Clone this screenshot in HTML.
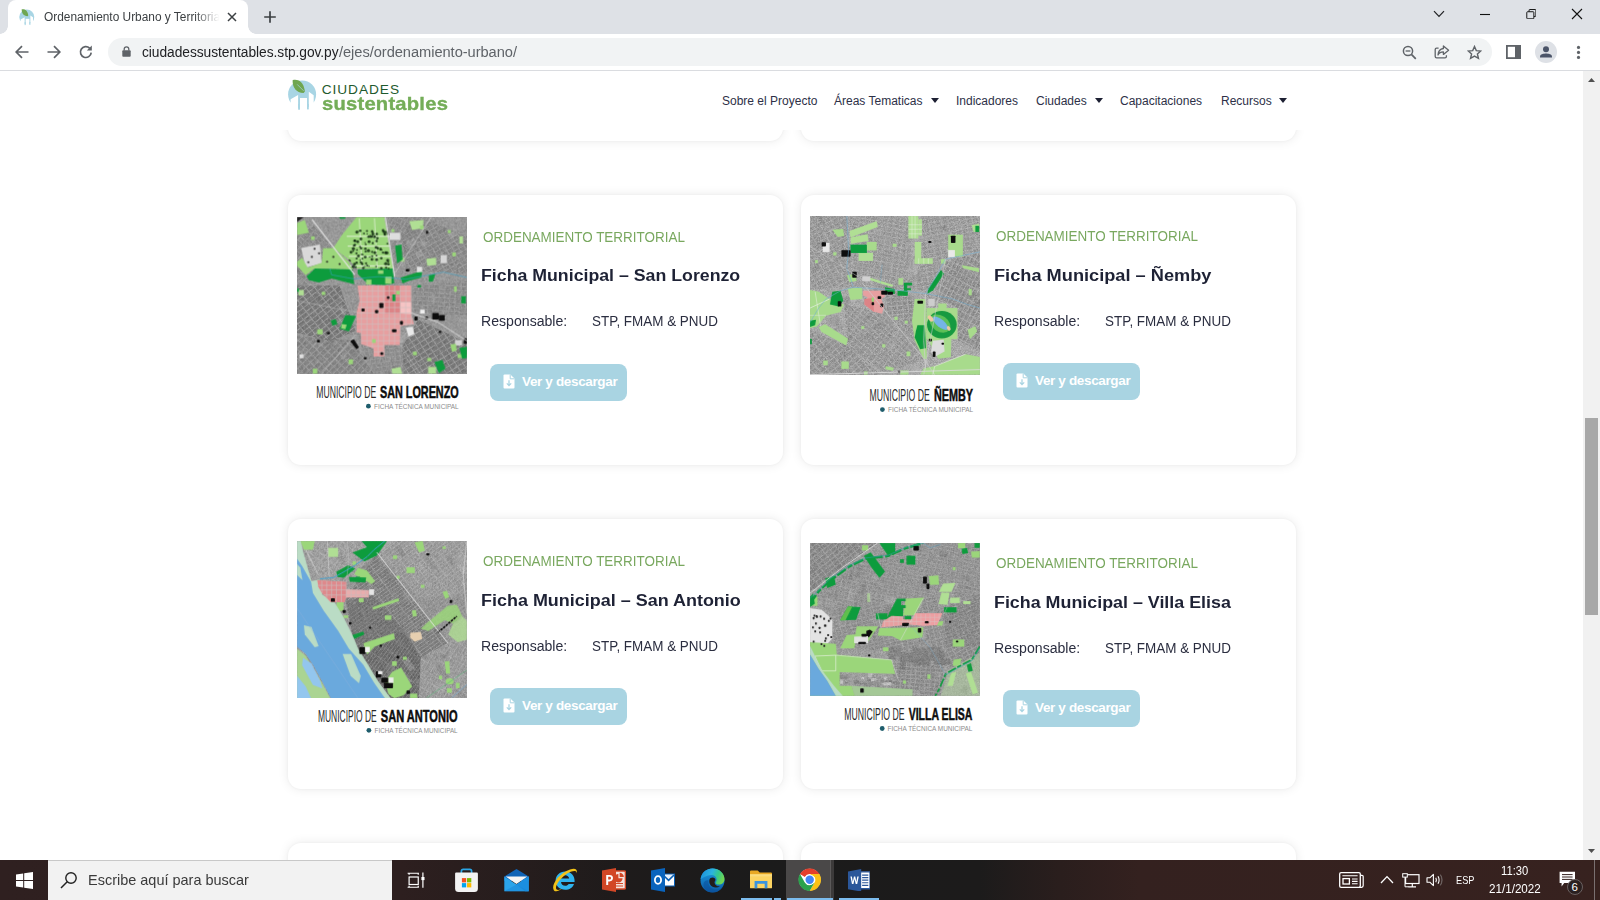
<!DOCTYPE html>
<html lang="es">
<head>
<meta charset="utf-8">
<title>Ordenamiento Urbano y Territorial</title>
<style>
*{box-sizing:border-box;margin:0;padding:0}
html,body{width:1600px;height:900px;overflow:hidden;background:#fff;font-family:"Liberation Sans",sans-serif;}
body{position:relative}
.abs{position:absolute}
/* ---------- browser chrome ---------- */
#tabstrip{position:absolute;left:0;top:0;width:1600px;height:34px;background:#dee1e6}
#tab{position:absolute;left:8px;top:0;width:240px;height:34px;background:#fff;border-radius:8px 8px 0 0}
#tab:before,#tab:after{content:"";position:absolute;bottom:0;width:8px;height:8px;background:radial-gradient(circle at 0 0,transparent 7.5px,#fff 8px)}
#tab:before{left:-8px}
#tab:after{right:-8px;background:radial-gradient(circle at 100% 0,transparent 7.5px,#fff 8px)}
#tabtitle{position:absolute;left:36.4px;top:9.6px;font-size:12px;color:#3c4043;white-space:nowrap;width:178px;overflow:hidden;transform:scaleX(.99);transform-origin:0 0;
 -webkit-mask-image:linear-gradient(90deg,#000 152px,transparent 177px);mask-image:linear-gradient(90deg,#000 152px,transparent 177px)}
#toolbar{position:absolute;left:0;top:34px;width:1600px;height:37px;background:#fff;border-bottom:1px solid #dadce0}
#omni{position:absolute;left:108px;top:4px;width:1384px;height:28px;border-radius:14px;background:#f1f3f4}
#url{position:absolute;left:34px;top:6.4px;font-size:14px;color:#202124;white-space:nowrap;letter-spacing:-.05px}
#url span{color:#5f6368}
/* ---------- page ---------- */
#page{position:absolute;left:0;top:71px;width:1583px;height:789px;background:#fff;overflow:hidden}
#sb{position:absolute;left:1583px;top:71px;width:17px;height:789px;background:#f1f1f1}
#sbthumb{position:absolute;left:2px;top:347px;width:13px;height:197px;background:#a8a8a8}
#hdr{position:absolute;left:0;top:0;width:1583px;height:59px;background:#fff;z-index:5}
.nav{position:absolute;top:23px;font-size:12px;color:#2d3047;white-space:nowrap}
.caret{position:absolute;top:27px;width:0;height:0;border-left:4.5px solid transparent;border-right:4.5px solid transparent;border-top:5px solid #1d2033}
.card{position:absolute;width:495px;height:270px;background:#fff;border-radius:13px;box-shadow:0 0 11px rgba(0,0,0,.085),0 0 3px rgba(0,0,0,.04)}
.cat{position:absolute;font-size:14.5px;color:#79a85f;white-space:nowrap;transform:scaleX(.928);transform-origin:0 0}
.ttl{position:absolute;font-size:17.2px;font-weight:bold;color:#1e2235;white-space:nowrap;transform-origin:0 0}
.rsp{position:absolute;font-size:14.25px;color:#2b2e40;white-space:nowrap;transform-origin:0 0}
.btn{position:absolute;width:137px;height:37px;border-radius:8px;background:#a9d4e2;color:#fff;font-weight:bold;font-size:13.5px}
.btn span{position:absolute;left:32px;top:10px;white-space:nowrap;letter-spacing:-.35px}
.btn svg{position:absolute;left:12.6px;top:10.2px}
.mapwrap{position:absolute;width:170px;overflow:hidden}
.cap{position:absolute;font-size:13px;color:#222;white-space:nowrap;text-align:right;transform-origin:100% 50%}
.cap b{color:#111}
.sub{position:absolute;font-size:6px;color:#555;white-space:nowrap;text-align:right}
/* ---------- taskbar ---------- */
#tb{position:absolute;left:0;top:860px;width:1600px;height:40px;background:linear-gradient(90deg,#2f2020 0,#2d1f1f 400px,#261d1d 520px,#1e1b1b 620px,#1b1b1b 760px,#1c1b1b 980px,#2a1e1d 1060px,#34211f 1140px,#37221f 1600px)}
#search{position:absolute;left:48px;top:0;width:344px;height:40px;background:#f2f2f2;border-top:1px solid #c8c8c8}
#search span{position:absolute;left:40px;top:10px;font-size:15px;color:#3a3a3a;white-space:nowrap;transform:scaleX(.965);transform-origin:0 0}
.tray{position:absolute;color:#fff;font-size:11px;white-space:nowrap}
</style>
</head>
<body>

<!-- ======= TAB STRIP ======= -->
<div id="tabstrip">
  <div id="tab">
    <div id="tabtitle">Ordenamiento Urbano y Territorial</div>
    <svg class="abs" style="left:8.4px;top:5.6px" width="23.6" height="22.5" viewBox="0 0 44 42">
      <circle cx="20.1" cy="20.5" r="14" fill="#a8d5e4"/>
      <path d="M8.6 25.3 L16.1 21 V37 H3 V30 L8.6 28.6 Z" fill="#fff"/>
      <path d="M26.8 17.7 L31.7 21.2 V28.4 L36 30 V37 H26.8 Z" fill="#fff"/>
      <rect x="18" y="24" width="7" height="13" fill="#fff"/>
      <rect x="16.1" y="30" width="1.9" height="5.7" fill="#a8d5e4"/>
      <rect x="25" y="30" width="1.8" height="5.4" fill="#a8d5e4"/>
      <path d="M10.6 6.2 C15 5 21.5 6.5 22.9 17.6 L21.6 19 C14 18.4 10.6 14 10.6 6.2 Z" fill="#6fa650"/>
    </svg>
    <svg class="abs" style="left:219px;top:12px" width="10" height="10" viewBox="0 0 10 10"><path d="M1 1 L9 9 M9 1 L1 9" stroke="#3c4043" stroke-width="1.5" fill="none"/></svg>

  </div>

  <svg class="abs" style="left:263px;top:10px" width="14" height="14" viewBox="0 0 14 14"><path d="M7 1.2 V12.8 M1.2 7 H12.8" stroke="#3c4043" stroke-width="1.7" fill="none"/></svg>
  <svg class="abs" style="left:1433px;top:9px" width="12" height="10" viewBox="0 0 12 10"><path d="M1 2.2 L6 7.4 L11 2.2" stroke="#202124" stroke-width="1.2" fill="none"/></svg>
  <svg class="abs" style="left:1480px;top:13px" width="10" height="3" viewBox="0 0 10 3"><path d="M0 1.5 H10" stroke="#111" stroke-width="1.1"/></svg>
  <svg class="abs" style="left:1525.6px;top:8.7px" width="10.6" height="10.6" viewBox="0 0 12 12"><path d="M3.5 3 V1.2 Q3.5 .6 4.1 .6 H10.6 Q11.2 .6 11.2 1.2 V7.8 Q11.2 8.4 10.6 8.4 H9" stroke="#111" stroke-width="1.1" fill="none"/><rect x=".9" y="3.1" width="8" height="8" rx=".8" stroke="#111" stroke-width="1.1" fill="none"/></svg>
  <svg class="abs" style="left:1571px;top:8px" width="12" height="12" viewBox="0 0 12 12"><path d="M1 1 L11 11 M11 1 L1 11" stroke="#111" stroke-width="1.1" fill="none"/></svg>
</div>

<!-- ======= TOOLBAR ======= -->
<div id="toolbar">

  <svg class="abs" style="left:14px;top:10px" width="16" height="16" viewBox="0 0 16 16"><path d="M14.5 8 H2.5 M8 2.2 L2.2 8 L8 13.8" stroke="#5f6368" stroke-width="1.7" fill="none"/></svg>
  <svg class="abs" style="left:46px;top:10px" width="16" height="16" viewBox="0 0 16 16"><path d="M1.5 8 H13.5 M8 2.2 L13.8 8 L8 13.8" stroke="#5f6368" stroke-width="1.7" fill="none"/></svg>
  <svg class="abs" style="left:78px;top:10px" width="16" height="16" viewBox="0 0 16 16"><path d="M13.2 8.6 A5.4 5.4 0 1 1 11.6 4.2" stroke="#5f6368" stroke-width="1.7" fill="none"/><path d="M13.8 1.6 V6.6 H8.8 Z" fill="#5f6368"/></svg>
  <svg class="abs" style="left:1506px;top:11px" width="15" height="14" viewBox="0 0 15 14"><rect x=".9" y=".9" width="13.2" height="12.2" fill="none" stroke="#5f6368" stroke-width="1.8"/><rect x="9" y="1" width="5" height="12" fill="#5f6368"/></svg>
  <div class="abs" style="left:1535px;top:7px;width:22px;height:22px;border-radius:11px;background:#dee1e6"></div>
  <svg class="abs" style="left:1535px;top:7px" width="22" height="22" viewBox="0 0 22 22"><circle cx="11" cy="8.3" r="3" fill="#4b5468"/><path d="M5 16.6 V15.4 C5 13.2 8.6 12.4 11 12.4 C13.4 12.4 17 13.2 17 15.4 V16.6 Z" fill="#4b5468"/></svg>
  <svg class="abs" style="left:1576px;top:11px" width="5" height="15" viewBox="0 0 5 15"><circle cx="2.5" cy="2.4" r="1.6" fill="#5f6368"/><circle cx="2.5" cy="7.4" r="1.6" fill="#5f6368"/><circle cx="2.5" cy="12.4" r="1.6" fill="#5f6368"/></svg>
  <div id="omni">
    
    <svg class="abs" style="left:14px;top:8px" width="9" height="11" viewBox="0 0 9 11"><rect x=".3" y="4.3" width="8.4" height="6.4" rx=".9" fill="#5f6368"/><path d="M2.2 4.6 V3.1 A2.3 2.3 0 0 1 6.8 3.1 V4.6" stroke="#5f6368" stroke-width="1.3" fill="none"/></svg>
    <svg class="abs" style="left:1294px;top:7px" width="15" height="15" viewBox="0 0 15 15"><circle cx="6" cy="6" r="4.6" stroke="#5f6368" stroke-width="1.5" fill="none"/><path d="M9.4 9.4 L13.8 13.8" stroke="#5f6368" stroke-width="1.7"/><path d="M3.6 6 H8.4" stroke="#5f6368" stroke-width="1.3"/></svg>
    <svg class="abs" style="left:1326px;top:7px" width="16" height="14" viewBox="0 0 16 14"><path d="M4.6 3.2 H2.6 Q1.2 3.2 1.2 4.6 V11.4 Q1.2 12.8 2.6 12.8 H11 Q12.4 12.8 12.4 11.4 V10.2" stroke="#5f6368" stroke-width="1.3" fill="none"/><path d="M9.4 .9 L14.6 5.2 L9.4 9.4 V6.9 C6.6 6.9 5 8 4 10 C4.2 6.6 6 4 9.4 3.5 Z" stroke="#5f6368" stroke-width="1.3" fill="none" stroke-linejoin="round"/></svg>
    <svg class="abs" style="left:1358.6px;top:6.6px" width="15" height="15" viewBox="0 0 16 16"><path d="M8 1.6 L9.9 6 L14.7 6.4 L11.1 9.6 L12.2 14.3 L8 11.8 L3.8 14.3 L4.9 9.6 L1.3 6.4 L6.1 6 Z" stroke="#5f6368" stroke-width="1.5" fill="none" stroke-linejoin="miter"/></svg>
    <div id="url" style="transform:scaleX(.984);transform-origin:0 0">ciudadessustentables.stp.gov.py</div><div id="url" style="left:230.8px;color:#5f6368;transform:scaleX(1.047);transform-origin:0 0">/ejes/ordenamiento-urbano/</div>
  </div>
</div>

<!-- ======= PAGE ======= -->
<div id="page">
  <div id="hdr">

    <svg class="abs" style="left:282px;top:3px" width="44" height="42" viewBox="0 0 44 42">
      <circle cx="20.1" cy="20.5" r="14" fill="#a8d5e4"/>
      <path d="M8.6 25.3 L16.1 21 V37 H3 V30 L8.6 28.6 Z" fill="#fff"/>
      <path d="M26.8 17.7 L31.7 21.2 V28.4 L36 30 V37 H26.8 Z" fill="#fff"/>
      <rect x="18" y="24" width="7" height="13" fill="#fff"/>
      <rect x="16.1" y="30" width="1.9" height="5.7" fill="#a8d5e4"/>
      <rect x="25" y="30" width="1.8" height="5.4" fill="#a8d5e4"/>
      <path d="M10.6 6.2 C15 5 21.5 6.5 22.9 17.6 L21.6 19 C14 18.4 10.6 14 10.6 6.2 Z" fill="#6fa650"/>
      <path d="M15.2 10.4 L21.6 16.8" stroke="#a8d5e4" stroke-width=".7"/>
    </svg>
    <div class="abs" style="left:321.7px;top:10.6px;font-size:13.7px;color:#1f5a2e;letter-spacing:.95px;white-space:nowrap">CIUDADES</div>
    <div class="abs" style="left:321.8px;top:23px;font-size:18.2px;font-weight:bold;color:#74ad58;letter-spacing:.2px;white-space:nowrap;transform:scaleX(1.11);transform-origin:0 0;-webkit-text-stroke:.35px #74ad58">sustentables</div>
    <div class="nav" style="left:722px">Sobre el Proyecto</div>
    <div class="nav" style="left:834px">Áreas Tematicas</div><div class="caret" style="left:931px"></div>
    <div class="nav" style="left:956px">Indicadores</div>
    <div class="nav" style="left:1036px">Ciudades</div><div class="caret" style="left:1095px"></div>
    <div class="nav" style="left:1120px">Capacitaciones</div>
    <div class="nav" style="left:1221px">Recursos</div><div class="caret" style="left:1279px"></div>
  </div>

  <!-- previous row (partially hidden) -->
  <div class="card" style="left:288px;top:-200px"></div>
  <div class="card" style="left:801px;top:-200px"></div>

  <!-- row 1 -->
  <div class="card" style="left:288px;top:124px" id="c1">
    <div class="mapwrap" style="left:9px;top:22px;height:157px"><!--M1S-->
<svg width="170" height="157" viewBox="0 0 170 157" style="display:block">
<defs>
<filter id="nz1" x="0" y="0" width="100%" height="100%"><feTurbulence type="fractalNoise" baseFrequency="0.55" numOctaves="2" seed="10"/><feColorMatrix type="matrix" values="0 0 0 0 0  0 0 0 0 0  0 0 0 0 0  1.6 0 0 0 -0.45"/></filter>
<filter id="nw1" x="0" y="0" width="100%" height="100%"><feTurbulence type="fractalNoise" baseFrequency="0.5" numOctaves="2" seed="16"/><feColorMatrix type="matrix" values="0 0 0 0 1  0 0 0 0 1  0 0 0 0 1  0 1.6 0 0 -0.5"/></filter>
<filter id="bl1"><feGaussianBlur stdDeviation="0.35"/></filter>
<clipPath id="cp1"><rect width="170" height="157"/></clipPath>
<pattern id="g1a" width="40" height="26" patternUnits="userSpaceOnUse" patternTransform="rotate(-38)"><rect width="34" height="20" fill="#6b6b6b"/></pattern><pattern id="g1b" width="36" height="28" patternUnits="userSpaceOnUse" patternTransform="rotate(-32)"><rect width="30" height="22" fill="#6e6e6e"/></pattern><pattern id="g1c" width="32" height="24" patternUnits="userSpaceOnUse" patternTransform="rotate(-30)"><rect width="26" height="18" fill="#7a7a7a"/></pattern><pattern id="g1d" width="30" height="24" patternUnits="userSpaceOnUse" patternTransform="rotate(4)"><rect width="24" height="18" fill="#808080"/></pattern><pattern id="g1e" width="37" height="27" patternUnits="userSpaceOnUse" patternTransform="rotate(-45)"><rect width="30" height="20" fill="#747474"/></pattern><pattern id="g1f" width="36" height="24" patternUnits="userSpaceOnUse" patternTransform="rotate(42)"><rect width="30" height="18" fill="#7c7c7c"/></pattern><pattern id="g1g" width="28" height="24" patternUnits="userSpaceOnUse" patternTransform="rotate(-8)"><rect width="22" height="18" fill="#828282"/></pattern><pattern id="g1h" width="30" height="22" patternUnits="userSpaceOnUse" patternTransform="rotate(-58)"><rect width="24" height="16" fill="#7e7e7e"/></pattern><clipPath id="pk1"><polygon points="350,395 650,395 650,560 666,612 590,622 586,727 500,727 500,792 440,792 440,747 370,722 370,662 345,656 345,545 362,480"/></clipPath></defs>
<g clip-path="url(#cp1)" filter="url(#bl1)">
<rect width="170" height="157" fill="#9e9e9e"/>
<g transform="scale(0.17883) translate(-12,-12)">
<polygon points="12,395 250,395 340,650 200,705 12,660" fill="url(#g1a)" opacity="0.75"/>
<polygon points="690,585 962,715 962,888 610,888 600,740" fill="url(#g1b)" opacity="0.75"/>
<polygon points="600,100 760,40 962,120 962,330 620,310" fill="url(#g1c)" opacity="0.55"/>
<polygon points="665,400 962,370 962,560 800,560 665,540" fill="url(#g1d)" opacity="0.5"/>
<polygon points="12,680 320,700 440,888 12,888" fill="url(#g1e)" opacity="0.6"/>
<polygon points="12,120 110,60 330,330 12,400" fill="url(#g1f)" opacity="0.5"/>
<polygon points="340,660 600,740 620,888 440,888" fill="url(#g1g)" opacity="0.45"/>
<polygon points="520,12 760,12 590,300 560,300" fill="url(#g1h)" opacity="0.45"/>
<g opacity="0.35"><rect x="219" y="475" width="38" height="27" fill="#959595" transform="rotate(-29 238 489)"/><rect x="853" y="415" width="44" height="17" fill="#959595" transform="rotate(60 875 423)"/><rect x="507" y="351" width="55" height="18" fill="#8a8a8a" transform="rotate(62 534 360)"/><rect x="624" y="55" width="52" height="26" fill="#6f6f6f" transform="rotate(-27 650 68)"/><rect x="239" y="522" width="57" height="22" fill="#b8b8b8" transform="rotate(62 268 533)"/><rect x="545" y="846" width="30" height="21" fill="#7c7c7c" transform="rotate(-30 560 857)"/><rect x="231" y="584" width="52" height="33" fill="#b8b8b8" transform="rotate(61 257 601)"/><rect x="503" y="359" width="33" height="20" fill="#7c7c7c" transform="rotate(-26 519 369)"/><rect x="622" y="137" width="55" height="35" fill="#c6c6c6" transform="rotate(-28 650 155)"/><rect x="190" y="731" width="45" height="19" fill="#7c7c7c" transform="rotate(63 213 740)"/><rect x="926" y="78" width="53" height="22" fill="#8a8a8a" transform="rotate(-32 952 90)"/><rect x="729" y="763" width="27" height="27" fill="#7c7c7c" transform="rotate(62 742 777)"/><rect x="297" y="771" width="59" height="24" fill="#7c7c7c" transform="rotate(-34 326 784)"/><rect x="86" y="464" width="58" height="35" fill="#6f6f6f" transform="rotate(-33 115 481)"/><rect x="34" y="755" width="36" height="35" fill="#b8b8b8" transform="rotate(60 52 772)"/><rect x="483" y="563" width="46" height="26" fill="#c6c6c6" transform="rotate(-31 506 576)"/><rect x="679" y="202" width="36" height="35" fill="#c6c6c6" transform="rotate(-30 696 220)"/><rect x="0" y="369" width="45" height="13" fill="#c6c6c6" transform="rotate(-34 23 376)"/><rect x="584" y="410" width="49" height="21" fill="#959595" transform="rotate(-28 608 420)"/><rect x="9" y="47" width="49" height="35" fill="#6f6f6f" transform="rotate(58 33 65)"/><rect x="568" y="152" width="31" height="30" fill="#c6c6c6" transform="rotate(-32 583 167)"/><rect x="357" y="676" width="26" height="26" fill="#959595" transform="rotate(-32 370 689)"/><rect x="207" y="708" width="33" height="17" fill="#b8b8b8" transform="rotate(-33 223 716)"/><rect x="291" y="293" width="54" height="23" fill="#8a8a8a" transform="rotate(-31 318 304)"/><rect x="609" y="778" width="41" height="18" fill="#7c7c7c" transform="rotate(-30 630 787)"/><rect x="166" y="710" width="54" height="17" fill="#6f6f6f" transform="rotate(-28 193 719)"/><rect x="603" y="711" width="37" height="16" fill="#6f6f6f" transform="rotate(-30 622 718)"/><rect x="592" y="260" width="45" height="13" fill="#b8b8b8" transform="rotate(-32 614 266)"/><rect x="442" y="729" width="47" height="24" fill="#c6c6c6" transform="rotate(-34 465 741)"/><rect x="420" y="654" width="51" height="35" fill="#c6c6c6" transform="rotate(-27 446 672)"/><rect x="801" y="756" width="59" height="15" fill="#8a8a8a" transform="rotate(-34 830 764)"/><rect x="759" y="444" width="32" height="33" fill="#b8b8b8" transform="rotate(-34 775 461)"/><rect x="702" y="148" width="35" height="28" fill="#c6c6c6" transform="rotate(56 720 163)"/><rect x="865" y="94" width="29" height="35" fill="#c6c6c6" transform="rotate(62 879 112)"/><rect x="56" y="189" width="29" height="33" fill="#7c7c7c" transform="rotate(-32 70 205)"/><rect x="257" y="774" width="29" height="34" fill="#b8b8b8" transform="rotate(56 272 791)"/><rect x="248" y="236" width="43" height="22" fill="#b8b8b8" transform="rotate(-28 270 247)"/><rect x="-1" y="52" width="29" height="15" fill="#7c7c7c" transform="rotate(64 14 60)"/><rect x="802" y="77" width="43" height="20" fill="#6f6f6f" transform="rotate(-31 824 87)"/><rect x="608" y="517" width="38" height="17" fill="#6f6f6f" transform="rotate(57 627 526)"/><rect x="521" y="632" width="38" height="14" fill="#8a8a8a" transform="rotate(-31 540 639)"/><rect x="567" y="682" width="38" height="31" fill="#c6c6c6" transform="rotate(56 586 698)"/><rect x="590" y="660" width="36" height="35" fill="#b8b8b8" transform="rotate(56 608 678)"/><rect x="197" y="233" width="46" height="31" fill="#8a8a8a" transform="rotate(57 220 249)"/><rect x="9" y="284" width="59" height="26" fill="#6f6f6f" transform="rotate(-30 39 297)"/><rect x="105" y="708" width="48" height="33" fill="#b8b8b8" transform="rotate(-28 129 724)"/><rect x="525" y="96" width="46" height="13" fill="#8a8a8a" transform="rotate(-28 548 102)"/><rect x="40" y="76" width="28" height="33" fill="#8a8a8a" transform="rotate(-31 54 92)"/><rect x="807" y="22" width="29" height="24" fill="#959595" transform="rotate(-29 822 34)"/><rect x="745" y="32" width="52" height="25" fill="#959595" transform="rotate(-33 771 44)"/></g>
<rect x="12" y="12" width="951" height="878" filter="url(#nz1)" opacity=".26"/><rect x="12" y="12" width="951" height="878" filter="url(#nw1)" opacity=".24"/>
<polygon points="35,185 140,165 150,270 60,295" fill="#d9d9d9" />
<rect x="530" y="100" width="60" height="40" fill="#dedede" />
<rect x="815" y="225" width="35" height="45" fill="#d6d6d6" />
<rect x="682" y="290" width="30" height="32" fill="#e2e2e2" />
<rect x="700" y="530" width="26" height="22" fill="#f0f0f0" />
<polygon points="620,630 660,625 668,668 635,682" fill="#e9e9e9" />
<rect x="895" y="700" width="40" height="30" fill="#d4d4d4" />
<rect x="25" y="780" width="23" height="22" fill="#e0e0e0" />
<polygon points="345,12 500,12 525,170 552,300 345,300 300,250 215,185 265,110" fill="#9bd67a" />
<polygon points="158,186 215,185 300,260 325,305 110,300 60,338 12,285 12,262 40,240 72,296 150,268" fill="#9bd67a" />
<polygon points="12,45 55,28 78,100 12,112" fill="#9bd67a" />
<polygon points="640,35 720,28 715,75 655,85" fill="#b0df94" />
<rect x="880" y="210" width="20" height="22" fill="#9bd67a" />
<polygon points="735,245 790,240 790,280 740,285" fill="#b0df94" />
<rect x="300" y="808" width="25" height="27" fill="#9bd67a" />
<rect x="660" y="765" width="22" height="20" fill="#9bd67a" />
<polygon points="870,725 900,720 905,760 878,765" fill="#9bd67a" />
<rect x="740" y="800" width="22" height="18" fill="#9bd67a" />
<rect x="910" y="778" width="22" height="22" fill="#9bd67a" />
<rect x="125" y="640" width="30" height="28" fill="#9bd67a" />
<rect x="890" y="400" width="15" height="30" fill="#9bd67a" />
<rect x="920" y="120" width="20" height="40" fill="#b0df94" />
<rect x="855" y="85" width="17" height="17" fill="#9bd67a" />
<rect x="540" y="80" width="16" height="16" fill="#9bd67a" />
<rect x="90" y="120" width="20" height="20" fill="#9bd67a" />
<rect x="20" y="420" width="30" height="30" fill="#b0df94" />
<rect x="150" y="430" width="20" height="18" fill="#9bd67a" />
<rect x="100" y="860" width="25" height="28" fill="#9bd67a" />
<polygon points="540,860 590,850 600,888 545,888" fill="#b0df94" />
<rect x="745" y="850" width="45" height="38" fill="#b0df94" />
<rect x="590" y="240" width="22" height="22" fill="#9bd67a" />
<rect x="700" y="60" width="20" height="22" fill="#9bd67a" />
<polygon points="65,345 112,300 322,305 332,388 205,355 135,378 78,366" fill="#0f9c3d" />
<polygon points="350,305 548,300 556,382 500,392 410,388 352,332" fill="#0f9c3d" />
<polygon points="560,172 596,165 602,250 572,272" fill="#0f9c3d" />
<polygon points="590,352 680,322 712,320 706,352 640,368 602,384" fill="#0f9c3d" />
<polygon points="750,336 786,330 772,372 748,374" fill="#0f9c3d" />
<polygon points="200,590 228,582 238,612 210,620" fill="#0f9c3d" />
<polygon points="282,560 342,566 302,652 250,636" fill="#0f9c3d" />
<polygon points="262,610 290,615 282,640 258,634" fill="#9bd67a" />
<rect x="930" y="455" width="26" height="40" fill="#0f9c3d" />
<polygon points="920,745 962,738 962,800 935,805" fill="#0f9c3d" />
<polygon points="780,822 825,812 842,860 805,885" fill="#0f9c3d" />
<rect x="250" y="12" width="32" height="10" fill="#0f9c3d" />
<rect x="685" y="392" width="20" height="14" fill="#0f9c3d" />
<rect x="12" y="410" width="10" height="20" fill="#0f9c3d" />
<rect x="465" y="310" width="30" height="20" fill="#9bd67a" />
<rect x="505" y="345" width="35" height="40" fill="#9bd67a" />
<rect x="398" y="362" width="30" height="28" fill="#9bd67a" />
<path d="M290.0 120 L535 120" stroke="#e8f3e0" stroke-width="5" fill="none" />
<path d="M295.5 175 L535 175" stroke="#e8f3e0" stroke-width="5" fill="none" />
<path d="M301.2 232 L535 232" stroke="#e8f3e0" stroke-width="5" fill="none" />
<path d="M306.5 285 L535 285" stroke="#e8f3e0" stroke-width="5" fill="none" />
<path d="M360 20 L375 300" stroke="#e8f3e0" stroke-width="4" fill="none" />
<path d="M445 20 L460 300" stroke="#e8f3e0" stroke-width="4" fill="none" />
<circle cx="396" cy="165" r="5" fill="#102a10" opacity=".85"/>
<circle cx="493" cy="86" r="7" fill="#102a10" opacity=".85"/>
<circle cx="501" cy="102" r="7" fill="#102a10" opacity=".85"/>
<circle cx="433" cy="94" r="6" fill="#102a10" opacity=".85"/>
<circle cx="454" cy="182" r="8" fill="#102a10" opacity=".85"/>
<circle cx="507" cy="212" r="8" fill="#102a10" opacity=".85"/>
<circle cx="377" cy="245" r="5" fill="#102a10" opacity=".85"/>
<circle cx="355" cy="230" r="8" fill="#102a10" opacity=".85"/>
<circle cx="386" cy="104" r="5" fill="#102a10" opacity=".85"/>
<circle cx="335" cy="145" r="8" fill="#102a10" opacity=".85"/>
<circle cx="333" cy="276" r="8" fill="#102a10" opacity=".85"/>
<circle cx="403" cy="90" r="6" fill="#102a10" opacity=".85"/>
<circle cx="503" cy="109" r="7" fill="#102a10" opacity=".85"/>
<circle cx="314" cy="209" r="8" fill="#102a10" opacity=".85"/>
<circle cx="404" cy="283" r="6" fill="#102a10" opacity=".85"/>
<circle cx="381" cy="222" r="4" fill="#102a10" opacity=".85"/>
<circle cx="424" cy="122" r="7" fill="#102a10" opacity=".85"/>
<circle cx="515" cy="97" r="7" fill="#102a10" opacity=".85"/>
<circle cx="431" cy="117" r="5" fill="#102a10" opacity=".85"/>
<circle cx="524" cy="300" r="5" fill="#102a10" opacity=".85"/>
<circle cx="454" cy="289" r="5" fill="#102a10" opacity=".85"/>
<circle cx="432" cy="94" r="6" fill="#102a10" opacity=".85"/>
<circle cx="447" cy="212" r="8" fill="#102a10" opacity=".85"/>
<circle cx="492" cy="211" r="6" fill="#102a10" opacity=".85"/>
<circle cx="382" cy="297" r="7" fill="#102a10" opacity=".85"/>
<circle cx="364" cy="178" r="5" fill="#102a10" opacity=".85"/>
<circle cx="392" cy="155" r="4" fill="#102a10" opacity=".85"/>
<circle cx="436" cy="107" r="8" fill="#102a10" opacity=".85"/>
<circle cx="479" cy="192" r="8" fill="#102a10" opacity=".85"/>
<circle cx="345" cy="244" r="6" fill="#102a10" opacity=".85"/>
<circle cx="340" cy="292" r="6" fill="#102a10" opacity=".85"/>
<circle cx="375" cy="270" r="6" fill="#102a10" opacity=".85"/>
<circle cx="445" cy="122" r="8" fill="#102a10" opacity=".85"/>
<circle cx="347" cy="96" r="9" fill="#102a10" opacity=".85"/>
<circle cx="326" cy="289" r="9" fill="#102a10" opacity=".85"/>
<circle cx="431" cy="88" r="4" fill="#102a10" opacity=".85"/>
<circle cx="335" cy="169" r="7" fill="#102a10" opacity=".85"/>
<circle cx="517" cy="161" r="5" fill="#102a10" opacity=".85"/>
<circle cx="420" cy="115" r="4" fill="#102a10" opacity=".85"/>
<circle cx="418" cy="235" r="4" fill="#102a10" opacity=".85"/>
<circle cx="393" cy="236" r="8" fill="#102a10" opacity=".85"/>
<circle cx="377" cy="276" r="5" fill="#102a10" opacity=".85"/>
<circle cx="457" cy="251" r="8" fill="#102a10" opacity=".85"/>
<circle cx="404" cy="106" r="4" fill="#102a10" opacity=".85"/>
<circle cx="412" cy="122" r="7" fill="#102a10" opacity=".85"/>
<circle cx="305" cy="253" r="5" fill="#102a10" opacity=".85"/>
<circle cx="395" cy="205" r="6" fill="#102a10" opacity=".85"/>
<circle cx="327" cy="189" r="9" fill="#102a10" opacity=".85"/>
<circle cx="414" cy="287" r="4" fill="#102a10" opacity=".85"/>
<circle cx="523" cy="276" r="7" fill="#102a10" opacity=".85"/>
<circle cx="411" cy="200" r="9" fill="#102a10" opacity=".85"/>
<circle cx="415" cy="150" r="8" fill="#102a10" opacity=".85"/>
<circle cx="458" cy="107" r="7" fill="#102a10" opacity=".85"/>
<circle cx="394" cy="190" r="7" fill="#102a10" opacity=".85"/>
<circle cx="375" cy="274" r="5" fill="#102a10" opacity=".85"/>
<circle cx="483" cy="242" r="7" fill="#102a10" opacity=".85"/>
<circle cx="495" cy="93" r="7" fill="#102a10" opacity=".85"/>
<circle cx="432" cy="231" r="6" fill="#102a10" opacity=".85"/>
<circle cx="431" cy="124" r="4" fill="#102a10" opacity=".85"/>
<circle cx="370" cy="186" r="7" fill="#102a10" opacity=".85"/>
<circle cx="365" cy="253" r="4" fill="#102a10" opacity=".85"/>
<circle cx="514" cy="212" r="9" fill="#102a10" opacity=".85"/>
<circle cx="522" cy="264" r="5" fill="#102a10" opacity=".85"/>
<circle cx="369" cy="135" r="8" fill="#102a10" opacity=".85"/>
<circle cx="510" cy="295" r="6" fill="#102a10" opacity=".85"/>
<circle cx="463" cy="186" r="7" fill="#102a10" opacity=".85"/>
<circle cx="374" cy="221" r="5" fill="#102a10" opacity=".85"/>
<circle cx="347" cy="196" r="5" fill="#102a10" opacity=".85"/>
<circle cx="390" cy="288" r="4" fill="#102a10" opacity=".85"/>
<circle cx="310" cy="257" r="4" fill="#102a10" opacity=".85"/>
<circle cx="345" cy="268" r="7" fill="#102a10" opacity=".85"/>
<circle cx="351" cy="150" r="8" fill="#102a10" opacity=".85"/>
<circle cx="519" cy="254" r="9" fill="#102a10" opacity=".85"/>
<circle cx="508" cy="273" r="9" fill="#102a10" opacity=".85"/>
<circle cx="517" cy="105" r="6" fill="#102a10" opacity=".85"/>
<circle cx="344" cy="215" r="6" fill="#102a10" opacity=".85"/>
<circle cx="368" cy="265" r="6" fill="#102a10" opacity=".85"/>
<circle cx="335" cy="144" r="6" fill="#102a10" opacity=".85"/>
<circle cx="432" cy="207" r="6" fill="#102a10" opacity=".85"/>
<circle cx="330" cy="171" r="6" fill="#102a10" opacity=".85"/>
<circle cx="326" cy="202" r="5" fill="#102a10" opacity=".85"/>
<circle cx="456" cy="227" r="5" fill="#102a10" opacity=".85"/>
<circle cx="435" cy="158" r="6" fill="#102a10" opacity=".85"/>
<circle cx="431" cy="249" r="8" fill="#102a10" opacity=".85"/>
<circle cx="461" cy="130" r="7" fill="#102a10" opacity=".85"/>
<circle cx="365" cy="89" r="7" fill="#102a10" opacity=".85"/>
<circle cx="398" cy="271" r="6" fill="#102a10" opacity=".85"/>
<circle cx="485" cy="196" r="4" fill="#102a10" opacity=".85"/>
<circle cx="457" cy="146" r="7" fill="#102a10" opacity=".85"/>
<circle cx="506" cy="94" r="5" fill="#102a10" opacity=".85"/>
<circle cx="483" cy="299" r="7" fill="#102a10" opacity=".85"/>
<circle cx="110" cy="190" r="6" fill="#151515" opacity=".8"/>
<circle cx="135" cy="215" r="6" fill="#151515" opacity=".8"/>
<circle cx="75" cy="265" r="6" fill="#151515" opacity=".8"/>
<circle cx="95" cy="235" r="6" fill="#151515" opacity=".8"/>
<circle cx="180" cy="262" r="6" fill="#151515" opacity=".8"/>
<circle cx="250" cy="275" r="6" fill="#151515" opacity=".8"/>
<circle cx="215" cy="235" r="6" fill="#151515" opacity=".8"/>
<path d="M195 300 L205 335 L330 358 L470 345 L620 360 L750 336 L830 320 L962 350" stroke="#37a5cf" stroke-width="3" fill="none" />
<polygon points="350,395 650,395 650,560 666,612 590,622 586,727 500,727 500,792 440,792 440,747 370,722 370,662 345,656 345,545 362,480" fill="#e79fa0" />
<polygon points="505,395 590,395 590,552 505,552" fill="#dd8386" />
<polygon points="590,490 650,490 650,555 590,552" fill="#f6c4c4" />
<path d="M372 395 V790 M403 395 V790 M434 395 V790 M465 395 V790 M496 395 V790 M527 395 V790 M558 395 V790 M589 395 V790 M620 395 V790 M651 395 V790 M345 425 H666 M345 456 H666 M345 487 H666 M345 518 H666 M345 549 H666 M345 580 H666 M345 611 H666 M345 642 H666 M345 673 H666 M345 704 H666 M345 735 H666 M345 766 H666" stroke="#cfc0c0" stroke-width="4" opacity=".9" clip-path="url(#pk1)"/>
<rect x="545" y="445" width="17" height="37" fill="#0f9c3d" />
<rect x="566" y="425" width="20" height="21" fill="#9bd67a" />
<rect x="432" y="695" width="20" height="21" fill="#9bd67a" />
<rect x="472" y="493" width="23" height="27" fill="#0b0b0b" rx="4"/>
<rect x="372" y="523" width="18" height="17" fill="#0b0b0b" rx="4"/>
<rect x="448" y="532" width="18" height="18" fill="#0b0b0b" rx="4"/>
<rect x="543" y="640" width="25" height="16" fill="#0b0b0b" rx="4"/>
<rect x="588" y="593" width="16" height="21" fill="#0b0b0b" rx="4"/>
<rect x="668" y="568" width="18" height="22" fill="#0b0b0b" rx="4"/>
<rect x="728" y="568" width="17" height="16" fill="#0b0b0b" rx="4"/>
<rect x="768" y="548" width="37" height="37" fill="#0b0b0b" rx="4"/>
<rect x="805" y="560" width="33" height="32" fill="#0b0b0b" rx="4"/>
<rect x="478" y="768" width="16" height="16" fill="#0b0b0b" rx="4"/>
<rect x="945" y="690" width="17" height="32" fill="#0b0b0b" rx="4"/>
<rect x="733" y="88" width="12" height="18" fill="#0b0b0b" rx="4"/>
<rect x="123" y="698" width="17" height="16" fill="#0b0b0b" rx="4"/>
<rect x="620" y="303" width="20" height="13" fill="#0b0b0b" rx="4"/>
<rect x="515" y="455" width="13" height="15" fill="#0b0b0b" rx="4"/>
<rect x="180" y="655" width="15" height="13" fill="#0b0b0b" rx="4"/>
<rect x="386" y="795" width="14" height="13" fill="#0b0b0b" rx="4"/>
<rect x="805" y="648" width="13" height="12" fill="#0b0b0b" rx="4"/>
<polygon points="308,705 330,695 358,740 345,752" fill="#0b0b0b" />
<polygon points="12,12 50,12 12,40" fill="#222" />
<path d="M95 25 L335 335" stroke="#e3e3e3" stroke-width="6" fill="none" />
<path d="M505 12 L557 345" stroke="#e6e6e6" stroke-width="6" fill="none" />
<path d="M760 14 L560 325" stroke="#cfcfcf" stroke-width="4" fill="none" />
<path d="M650 548 L800 600 L962 705" stroke="#d8d8d8" stroke-width="5" fill="none" />
<path d="M340 670 L200 830 L150 888" stroke="#c8c8c8" stroke-width="4" fill="none" />
<path d="M345 545 L12 480" stroke="#bdbdbd" stroke-width="3" fill="none" />
<path d="M590 727 L700 888" stroke="#c4c4c4" stroke-width="3" fill="none" />
</g>
</g>
</svg>
<!--M1E--></div>
    <svg class="abs" style="left:9px;top:187.4px" width="172" height="34" viewBox="0 0 172 34">
      <text x="19.3" y="16.0" font-family="Liberation Sans, sans-serif" font-size="16.2" fill="#2a2a2a" textLength="59.9" lengthAdjust="spacingAndGlyphs">MUNICIPIO DE</text>
      <text x="83" y="16.0" font-family="Liberation Sans, sans-serif" font-size="16.2" font-weight="bold" fill="#0d0d0d" stroke="#0d0d0d" stroke-width=".5" textLength="78.7" lengthAdjust="spacingAndGlyphs">SAN LORENZO</text>
      <circle cx="71.4" cy="24.2" r="2.4" fill="#1f5d6c"/>
      <text x="77.1" y="27.0" font-family="Liberation Sans, sans-serif" font-size="6.9" fill="#8c8c8c" textLength="84.6" lengthAdjust="spacingAndGlyphs">FICHA TÉCNICA MUNICIPAL</text>
    </svg>
    <div class="cat" style="left:195px;top:34px">ORDENAMIENTO TERRITORIAL</div>
    <div class="ttl" style="left:192.6px;top:70.2px;transform:scaleX(1.032)">Ficha Municipal – San Lorenzo</div>
    <div class="rsp" style="left:192.6px;top:118px;transform:scaleX(.99)">Responsable:</div>
    <div class="rsp" style="left:304.2px;top:118px;transform:scaleX(.943)">STP, FMAM &amp; PNUD</div>
    <div class="btn" style="left:202px;top:169px"><svg width="12" height="15" viewBox="0 0 12 15"><path d="M1.6 .5 H7.4 L11.5 4.6 V13.4 Q11.5 14.5 10.4 14.5 H1.6 Q.5 14.5 .5 13.4 V1.6 Q.5 .5 1.6 .5 Z" fill="#fff"/><path d="M7.2 .6 V4.8 H11.4" fill="none" stroke="#a9d4e2" stroke-width="1"/><path d="M6 6.2 V11.4 M3.8 9.4 L6 11.6 L8.2 9.4" stroke="#a9d4e2" stroke-width="1.3" fill="none"/></svg><span>Ver y descargar</span></div>
  </div>
  <div class="card" style="left:801px;top:124px" id="c2">
    <div class="mapwrap" style="left:9px;top:21px;height:159px"><!--M2S-->
<svg width="170" height="159" viewBox="0 0 170 159" style="display:block">
<defs>
<filter id="nz2" x="0" y="0" width="100%" height="100%"><feTurbulence type="fractalNoise" baseFrequency="0.55" numOctaves="2" seed="17"/><feColorMatrix type="matrix" values="0 0 0 0 0  0 0 0 0 0  0 0 0 0 0  1.6 0 0 0 -0.45"/></filter>
<filter id="nw2" x="0" y="0" width="100%" height="100%"><feTurbulence type="fractalNoise" baseFrequency="0.5" numOctaves="2" seed="21"/><feColorMatrix type="matrix" values="0 0 0 0 1  0 0 0 0 1  0 0 0 0 1  0 1.6 0 0 -0.5"/></filter>
<filter id="bl2"><feGaussianBlur stdDeviation="0.35"/></filter>
<clipPath id="cp2"><rect width="170" height="159"/></clipPath>
<pattern id="g2a" width="34" height="24" patternUnits="userSpaceOnUse" patternTransform="rotate(-28)"><rect width="28" height="18" fill="#7c7c7c"/></pattern><pattern id="g2b" width="32" height="24" patternUnits="userSpaceOnUse" patternTransform="rotate(10)"><rect width="26" height="18" fill="#808080"/></pattern><pattern id="g2c" width="34" height="24" patternUnits="userSpaceOnUse" patternTransform="rotate(-12)"><rect width="28" height="18" fill="#7e7e7e"/></pattern><pattern id="g2d" width="36" height="24" patternUnits="userSpaceOnUse" patternTransform="rotate(-62)"><rect width="30" height="18" fill="#6f6f6f"/></pattern><pattern id="g2e" width="36" height="26" patternUnits="userSpaceOnUse" patternTransform="rotate(-40)"><rect width="30" height="20" fill="#747474"/></pattern><pattern id="g2f" width="32" height="24" patternUnits="userSpaceOnUse" patternTransform="rotate(40)"><rect width="26" height="18" fill="#7a7a7a"/></pattern><pattern id="g2g" width="30" height="24" patternUnits="userSpaceOnUse" patternTransform="rotate(-5)"><rect width="24" height="18" fill="#6c6c6c"/></pattern></defs>
<g clip-path="url(#cp2)" filter="url(#bl2)">
<rect width="170" height="159" fill="#b2b2b2"/>
<g transform="scale(0.18106) translate(-12,-12)">
<polygon points="12,12 215,12 250,400 12,420" fill="url(#g2a)" opacity="0.38"/>
<polygon points="230,12 555,12 590,420 260,400" fill="url(#g2b)" opacity="0.34"/>
<polygon points="630,12 950,12 950,210 760,250 650,430 600,420" fill="url(#g2c)" opacity="0.34"/>
<polygon points="760,260 950,215 950,760 830,700 830,520 700,470" fill="url(#g2d)" opacity="0.45"/>
<polygon points="12,640 220,730 400,888 12,888" fill="url(#g2e)" opacity="0.41"/>
<polygon points="200,500 420,550 590,600 640,800 420,888 220,725" fill="url(#g2f)" opacity="0.38"/>
<polygon points="430,450 590,450 590,600 420,550" fill="url(#g2g)" opacity="0.41"/>
<g opacity="0.3"><rect x="140" y="603" width="54" height="27" fill="#8a8a8a" transform="rotate(67 167 616)"/><rect x="475" y="448" width="36" height="13" fill="#6f6f6f" transform="rotate(62 493 454)"/><rect x="739" y="209" width="35" height="14" fill="#959595" transform="rotate(66 757 215)"/><rect x="20" y="292" width="47" height="16" fill="#6f6f6f" transform="rotate(-28 44 300)"/><rect x="745" y="108" width="67" height="26" fill="#c6c6c6" transform="rotate(-26 779 121)"/><rect x="131" y="576" width="46" height="37" fill="#7c7c7c" transform="rotate(-27 154 595)"/><rect x="891" y="778" width="59" height="35" fill="#c6c6c6" transform="rotate(-28 921 795)"/><rect x="442" y="717" width="34" height="40" fill="#c6c6c6" transform="rotate(63 459 736)"/><rect x="888" y="438" width="39" height="27" fill="#6f6f6f" transform="rotate(-22 907 451)"/><rect x="126" y="633" width="69" height="13" fill="#7c7c7c" transform="rotate(-24 161 639)"/><rect x="296" y="854" width="30" height="32" fill="#959595" transform="rotate(-22 311 870)"/><rect x="290" y="670" width="67" height="20" fill="#8a8a8a" transform="rotate(-22 324 679)"/><rect x="159" y="381" width="32" height="14" fill="#c6c6c6" transform="rotate(-26 175 388)"/><rect x="914" y="835" width="52" height="39" fill="#b8b8b8" transform="rotate(66 940 854)"/><rect x="865" y="215" width="50" height="25" fill="#b8b8b8" transform="rotate(61 890 227)"/><rect x="255" y="753" width="55" height="14" fill="#8a8a8a" transform="rotate(-26 282 759)"/><rect x="813" y="569" width="32" height="17" fill="#959595" transform="rotate(61 828 577)"/><rect x="110" y="568" width="66" height="27" fill="#8a8a8a" transform="rotate(-23 143 582)"/><rect x="817" y="524" width="44" height="30" fill="#b8b8b8" transform="rotate(-28 839 539)"/><rect x="535" y="122" width="57" height="24" fill="#8a8a8a" transform="rotate(-27 564 134)"/><rect x="284" y="218" width="68" height="25" fill="#959595" transform="rotate(67 318 231)"/><rect x="758" y="121" width="31" height="24" fill="#8a8a8a" transform="rotate(-24 774 133)"/><rect x="734" y="65" width="30" height="21" fill="#6f6f6f" transform="rotate(-26 749 75)"/><rect x="828" y="537" width="33" height="38" fill="#8a8a8a" transform="rotate(-24 845 556)"/><rect x="472" y="645" width="28" height="40" fill="#b8b8b8" transform="rotate(68 486 665)"/><rect x="354" y="499" width="63" height="19" fill="#959595" transform="rotate(-23 385 509)"/><rect x="213" y="128" width="58" height="42" fill="#c6c6c6" transform="rotate(69 242 149)"/><rect x="81" y="522" width="48" height="34" fill="#c6c6c6" transform="rotate(-27 104 539)"/><rect x="581" y="661" width="34" height="31" fill="#6f6f6f" transform="rotate(-26 598 676)"/><rect x="295" y="875" width="30" height="15" fill="#7c7c7c" transform="rotate(65 310 882)"/><rect x="872" y="594" width="57" height="26" fill="#c6c6c6" transform="rotate(68 900 608)"/><rect x="51" y="27" width="55" height="14" fill="#6f6f6f" transform="rotate(67 78 34)"/><rect x="419" y="206" width="42" height="27" fill="#959595" transform="rotate(-29 440 219)"/><rect x="148" y="329" width="52" height="19" fill="#b8b8b8" transform="rotate(-27 174 339)"/><rect x="846" y="332" width="53" height="37" fill="#959595" transform="rotate(-28 872 350)"/><rect x="173" y="771" width="57" height="15" fill="#8a8a8a" transform="rotate(-25 202 779)"/><rect x="564" y="320" width="58" height="41" fill="#8a8a8a" transform="rotate(63 594 341)"/><rect x="299" y="564" width="56" height="20" fill="#7c7c7c" transform="rotate(-25 327 574)"/><rect x="866" y="846" width="65" height="27" fill="#8a8a8a" transform="rotate(-23 898 859)"/><rect x="138" y="343" width="43" height="26" fill="#959595" transform="rotate(-24 159 356)"/><rect x="624" y="536" width="29" height="41" fill="#8a8a8a" transform="rotate(-26 638 557)"/><rect x="582" y="769" width="42" height="15" fill="#c6c6c6" transform="rotate(-26 602 776)"/><rect x="391" y="386" width="70" height="40" fill="#8a8a8a" transform="rotate(-21 426 406)"/><rect x="178" y="328" width="25" height="17" fill="#c6c6c6" transform="rotate(65 191 337)"/><rect x="37" y="162" width="43" height="29" fill="#8a8a8a" transform="rotate(68 58 176)"/><rect x="14" y="502" width="29" height="39" fill="#959595" transform="rotate(-28 29 522)"/><rect x="454" y="460" width="49" height="27" fill="#959595" transform="rotate(-28 479 473)"/><rect x="129" y="258" width="54" height="13" fill="#7c7c7c" transform="rotate(-28 156 264)"/><rect x="83" y="726" width="41" height="23" fill="#8a8a8a" transform="rotate(-24 104 738)"/><rect x="249" y="697" width="43" height="13" fill="#8a8a8a" transform="rotate(-25 270 703)"/><rect x="366" y="603" width="58" height="28" fill="#7c7c7c" transform="rotate(-22 395 617)"/><rect x="192" y="33" width="41" height="28" fill="#959595" transform="rotate(-29 212 47)"/><rect x="326" y="418" width="64" height="26" fill="#7c7c7c" transform="rotate(-24 358 431)"/><rect x="183" y="679" width="66" height="28" fill="#7c7c7c" transform="rotate(-26 216 693)"/><rect x="865" y="826" width="61" height="13" fill="#6f6f6f" transform="rotate(-24 895 833)"/><rect x="554" y="665" width="54" height="17" fill="#c6c6c6" transform="rotate(63 582 674)"/><rect x="918" y="481" width="60" height="34" fill="#6f6f6f" transform="rotate(-27 948 498)"/><rect x="547" y="301" width="55" height="38" fill="#c6c6c6" transform="rotate(-21 574 320)"/><rect x="838" y="827" width="59" height="42" fill="#959595" transform="rotate(-23 867 848)"/><rect x="191" y="458" width="42" height="42" fill="#6f6f6f" transform="rotate(-28 211 478)"/></g>
<rect x="12" y="12" width="939" height="878" filter="url(#nz2)" opacity=".26"/><rect x="12" y="12" width="939" height="878" filter="url(#nw2)" opacity=".24"/>
<polygon points="135,88 195,84 200,122 165,128" fill="#a8db8c" />
<polygon points="230,95 380,40 386,72 236,130" fill="#b0df94" />
<polygon points="236,130 330,112 335,150 238,165" fill="#b0df94" />
<rect x="325" y="155" width="55" height="47" fill="#a8db8c" />
<rect x="280" y="215" width="80" height="45" fill="#b0df94" />
<rect x="555" y="12" width="55" height="124" fill="#b0df94" />
<rect x="610" y="30" width="20" height="90" fill="#b0df94" />
<rect x="590" y="155" width="36" height="117" fill="#b0df94" />
<rect x="590" y="245" width="100" height="31" fill="#b0df94" />
<rect x="775" y="115" width="81" height="121" fill="#a8db8c" />
<polygon points="850,283 945,300 945,322 858,300" fill="#a8db8c" />
<polygon points="905,62 945,55 948,100 915,100" fill="#b0df94" />
<polygon points="330,362 345,352 472,392 465,404" fill="#b0df94" />
<rect x="500" y="355" width="26" height="37" fill="#a8db8c" />
<polygon points="12,420 60,430 120,472 200,500 182,542 100,562 50,622 12,632" fill="#a8db8c" />
<polygon points="60,626 95,610 222,690 212,727 75,652" fill="#a8db8c" />
<polygon points="220,412 300,408 300,470 235,475" fill="#a8db8c" />
<polygon points="590,470 652,470 657,802 640,802 590,700 575,590" fill="#a8db8c" />
<rect x="655" y="520" width="171" height="172" fill="#a8db8c" />
<rect x="720" y="495" width="46" height="37" fill="#a8db8c" />
<polygon points="660,690 792,690 790,792 720,800" fill="#a8db8c" />
<polygon points="700,842 872,775 950,790 950,888 620,888 640,852" fill="#a8db8c" />
<polygon points="882,640 925,620 935,650 895,692" fill="#a8db8c" />
<rect x="185" y="815" width="41" height="41" fill="#a8db8c" />
<rect x="85" y="810" width="25" height="26" fill="#a8db8c" />
<polygon points="430,842 475,850 470,868 428,858" fill="#a8db8c" />
<rect x="510" y="865" width="46" height="23" fill="#a8db8c" />
<rect x="545" y="760" width="21" height="26" fill="#a8db8c" />
<rect x="40" y="255" width="15" height="17" fill="#a8db8c" />
<rect x="140" y="212" width="18" height="18" fill="#a8db8c" />
<rect x="468" y="165" width="22" height="17" fill="#a8db8c" />
<rect x="295" y="620" width="17" height="16" fill="#a8db8c" />
<rect x="478" y="568" width="18" height="18" fill="#a8db8c" />
<rect x="888" y="415" width="17" height="35" fill="#a8db8c" />
<rect x="735" y="250" width="25" height="25" fill="#a8db8c" />
<rect x="310" y="870" width="20" height="18" fill="#a8db8c" />
<rect x="410" y="720" width="18" height="18" fill="#a8db8c" />
<rect x="535" y="590" width="17" height="16" fill="#a8db8c" />
<polygon points="215,340 260,330 270,370 230,378" fill="#a8db8c" />
<rect x="82" y="160" width="38" height="52" fill="#e6e6e6" />
<rect x="775" y="200" width="37" height="40" fill="#e9e9e9" />
<polygon points="690,700 750,695 755,760 700,790 680,760" fill="#dcdcdc" />
<rect x="300" y="345" width="45" height="27" fill="#d2d2d2" />
<rect x="665" y="470" width="35" height="40" fill="#cdcdcd" />
<path d="M12 520 L120 470" stroke="#e8f0e4" stroke-width="4" fill="none" />
<path d="M40 430 L70 620" stroke="#e8f0e4" stroke-width="3" fill="none" />
<path d="M12 560 L100 560" stroke="#dfeada" stroke-width="3" fill="none" />
<path d="M555 60 L630 60" stroke="#e4f0dc" stroke-width="3" fill="none" />
<path d="M555 85 L630 85" stroke="#e4f0dc" stroke-width="3" fill="none" />
<path d="M555 110 L630 110" stroke="#e4f0dc" stroke-width="3" fill="none" />
<path d="M575 12 L575 136" stroke="#e4f0dc" stroke-width="3" fill="none" />
<path d="M592 12 L592 136" stroke="#e4f0dc" stroke-width="3" fill="none" />
<path d="M612 245 L612 276" stroke="#e4f0dc" stroke-width="3" fill="none" />
<path d="M640 245 L640 276" stroke="#e4f0dc" stroke-width="3" fill="none" />
<path d="M665 245 L665 276" stroke="#e4f0dc" stroke-width="3" fill="none" />
<rect x="235" y="170" width="91" height="46" fill="#0f9c3d" />
<polygon points="135,430 180,425 196,480 170,512 122,500" fill="#0f9c3d" />
<rect x="495" y="425" width="57" height="27" fill="#0f9c3d" />
<polygon points="530,380 576,380 576,395 548,395 548,410 570,410 570,422 548,422 548,450 530,450" fill="#0f9c3d" />
<polygon points="425,405 480,415 480,442 430,440" fill="#0f9c3d" />
<polygon points="735,310 752,330 692,422 660,442 666,410" fill="#0f9c3d" />
<polygon points="605,615 646,615 652,742 620,747 590,682 596,650" fill="#0f9c3d" />
<rect x="925" y="66" width="21" height="34" fill="#0f9c3d" />
<rect x="12" y="690" width="10" height="30" fill="#0f9c3d" />
<polygon points="12,590 45,585 40,615 12,625" fill="#0f9c3d" />
<ellipse cx="740" cy="612" rx="82" ry="76" fill="#179a40"/>
<ellipse cx="730" cy="606" rx="62" ry="44" fill="#5dc058" transform="rotate(35 730 606)"/>
<ellipse cx="732" cy="604" rx="52" ry="21" fill="#74b4e6" transform="rotate(40 732 604)"/>
<ellipse cx="678" cy="578" rx="20" ry="12" fill="#edc9a2" transform="rotate(50 678 578)"/>
<ellipse cx="778" cy="632" rx="14" ry="9" fill="#edc9a2" transform="rotate(60 778 632)"/>
<polygon points="305,425 420,425 426,456 406,470 420,512 410,552 362,540 312,500 330,460 305,450" fill="#e79fa0" />
<polygon points="312,470 360,465 365,540 312,500" fill="#dd8386" />
<rect x="352" y="462" width="13" height="23" fill="#9bd67a" />
<rect x="185" y="200" width="51" height="36" fill="#0b0b0b" rx="4"/>
<rect x="76" y="156" width="24" height="24" fill="#0b0b0b" rx="4"/>
<rect x="245" y="320" width="25" height="32" fill="#0b0b0b" rx="4"/>
<rect x="605" y="480" width="31" height="16" fill="#0b0b0b" rx="4"/>
<rect x="790" y="120" width="25" height="40" fill="#0b0b0b" rx="4"/>
<rect x="405" y="425" width="35" height="21" fill="#0b0b0b" rx="4"/>
<rect x="440" y="430" width="30" height="16" fill="#0b0b0b" rx="4"/>
<rect x="385" y="455" width="20" height="15" fill="#0b0b0b" rx="4"/>
<rect x="400" y="495" width="16" height="21" fill="#0b0b0b" rx="4"/>
<rect x="352" y="488" width="14" height="17" fill="#0b0b0b" rx="4"/>
<rect x="165" y="482" width="20" height="30" fill="#0b0b0b" rx="4"/>
<rect x="668" y="690" width="17" height="15" fill="#0b0b0b" rx="4"/>
<rect x="690" y="760" width="15" height="30" fill="#0b0b0b" rx="4"/>
<rect x="738" y="712" width="14" height="10" fill="#0b0b0b" rx="4"/>
<rect x="665" y="150" width="17" height="10" fill="#0b0b0b" rx="4"/>
<rect x="498" y="866" width="12" height="14" fill="#0b0b0b" rx="4"/>
<path d="M215 12 L225 200 L215 300 L250 400" stroke="#6fb0d4" stroke-width="3" fill="none" />
<path d="M12 600 L60 520 L100 470 L180 425 L250 405 L480 420 L650 440 L700 360 L760 250 L950 210" stroke="#6fb0d4" stroke-width="3" fill="none" />
<path d="M650 440 L800 470 L880 500 L950 520" stroke="#6fb0d4" stroke-width="3" fill="none" />
<path d="M650 440 L640 700 L650 860" stroke="#cfcfcf" stroke-width="4" fill="none" />
<path d="M410 280 L400 380" stroke="#6fb0d4" stroke-width="2" fill="none" />
<path d="M12 888 L950 860" stroke="#dcdcdc" stroke-width="5" fill="none" />
<path d="M300 380 L640 800 L700 888" stroke="#d0d0d0" stroke-width="4" fill="none" />
<path d="M12 180 L330 380" stroke="#c8c8c8" stroke-width="3" fill="none" />
<path d="M760 250 L640 888" stroke="#d6d6d6" stroke-width="3" fill="none" />
<path d="M870 775 L700 842 L690 888" stroke="#f2f2f2" stroke-width="3" fill="none" />
</g>
</g>
</svg>
<!--M2E--></div>
    <svg class="abs" style="left:9px;top:189.6px" width="172" height="34" viewBox="0 0 172 34">
      <text x="59.5" y="16.0" font-family="Liberation Sans, sans-serif" font-size="16.2" fill="#2a2a2a" textLength="60.3" lengthAdjust="spacingAndGlyphs">MUNICIPIO DE</text>
      <text x="124" y="16.0" font-family="Liberation Sans, sans-serif" font-size="16.2" font-weight="bold" fill="#0d0d0d" stroke="#0d0d0d" stroke-width=".5" textLength="39.1" lengthAdjust="spacingAndGlyphs">ÑEMBY</text>
      <circle cx="72.4" cy="24.6" r="2.4" fill="#1f5d6c"/>
      <text x="78" y="27.2" font-family="Liberation Sans, sans-serif" font-size="6.9" fill="#8c8c8c" textLength="85.1" lengthAdjust="spacingAndGlyphs">FICHA TÉCNICA MUNICIPAL</text>
    </svg>
    <div class="cat" style="left:195px;top:33px">ORDENAMIENTO TERRITORIAL</div>
    <div class="ttl" style="left:192.6px;top:70.2px;transform:scaleX(1.059)">Ficha Municipal – Ñemby</div>
    <div class="rsp" style="left:192.6px;top:118px;transform:scaleX(.99)">Responsable:</div>
    <div class="rsp" style="left:304.2px;top:118px;transform:scaleX(.943)">STP, FMAM &amp; PNUD</div>
    <div class="btn" style="left:202px;top:168px"><svg width="12" height="15" viewBox="0 0 12 15"><path d="M1.6 .5 H7.4 L11.5 4.6 V13.4 Q11.5 14.5 10.4 14.5 H1.6 Q.5 14.5 .5 13.4 V1.6 Q.5 .5 1.6 .5 Z" fill="#fff"/><path d="M7.2 .6 V4.8 H11.4" fill="none" stroke="#a9d4e2" stroke-width="1"/><path d="M6 6.2 V11.4 M3.8 9.4 L6 11.6 L8.2 9.4" stroke="#a9d4e2" stroke-width="1.3" fill="none"/></svg><span>Ver y descargar</span></div>
  </div>

  <!-- row 2 -->
  <div class="card" style="left:288px;top:448px" id="c3">
    <div class="mapwrap" style="left:9px;top:22px;height:157px"><!--M3S-->
<svg width="170" height="157" viewBox="0 0 170 157" style="display:block">
<defs>
<filter id="nz3" x="0" y="0" width="100%" height="100%"><feTurbulence type="fractalNoise" baseFrequency="0.55" numOctaves="2" seed="24"/><feColorMatrix type="matrix" values="0 0 0 0 0  0 0 0 0 0  0 0 0 0 0  1.6 0 0 0 -0.45"/></filter>
<filter id="nw3" x="0" y="0" width="100%" height="100%"><feTurbulence type="fractalNoise" baseFrequency="0.5" numOctaves="2" seed="26"/><feColorMatrix type="matrix" values="0 0 0 0 1  0 0 0 0 1  0 0 0 0 1  0 1.6 0 0 -0.5"/></filter>
<filter id="bl3"><feGaussianBlur stdDeviation="0.35"/></filter>
<clipPath id="cp3"><rect width="170" height="157"/></clipPath>
<pattern id="g3a" width="32" height="24" patternUnits="userSpaceOnUse" patternTransform="rotate(-50)"><rect width="26" height="18" fill="#8f8f8f"/></pattern><pattern id="g3b" width="49" height="19" patternUnits="userSpaceOnUse" patternTransform="rotate(-38)"><rect width="44" height="14" fill="#868686"/></pattern><pattern id="g3c" width="64" height="18" patternUnits="userSpaceOnUse" patternTransform="rotate(-36)"><rect width="60" height="14" fill="#686868"/></pattern><pattern id="g3d" width="64" height="17" patternUnits="userSpaceOnUse" patternTransform="rotate(-54)"><rect width="60" height="13" fill="#5e5e5e"/></pattern><pattern id="g3e" width="45" height="19" patternUnits="userSpaceOnUse" patternTransform="rotate(-60)"><rect width="40" height="14" fill="#8a8a8a"/></pattern><clipPath id="pk3"><polygon points="125,230 285,240 285,280 410,285 410,326 280,326 276,352 200,352 150,300 130,266"/></clipPath></defs>
<g clip-path="url(#cp3)" filter="url(#bl3)">
<rect width="170" height="157" fill="#a4a4a4"/>
<g transform="scale(0.17995) translate(-12,-12)">
<polygon points="30,12 955,12 955,300 700,330 455,80 300,240 130,225" fill="#b9b9b9" opacity=".55"/>
<polygon points="30,12 460,12 460,80 300,240 130,225" fill="url(#g3a)" opacity="0.35"/>
<polygon points="460,80 560,12 955,12 955,420 850,580" fill="url(#g3b)" opacity="0.4"/>
<polygon points="290,350 420,300 620,520 700,660 690,885 530,885 400,700 330,600" fill="#6c6c6c" opacity=".5"/>
<polygon points="280,330 455,80 850,580 700,660 600,520 330,600" fill="url(#g3c)" opacity="0.6"/>
<polygon points="330,600 600,520 700,660 690,885 530,885 400,700" fill="url(#g3d)" opacity="0.7"/>
<polygon points="700,660 850,580 955,560 955,885 690,885" fill="#bcbcbc" opacity=".4"/>
<polygon points="700,660 850,580 955,560 955,885 690,885" fill="url(#g3e)" opacity="0.4"/>
<g opacity="0.3"><rect x="232" y="90" width="54" height="42" fill="#8a8a8a" transform="rotate(52 259 110)"/><rect x="707" y="126" width="89" height="16" fill="#7c7c7c" transform="rotate(50 752 134)"/><rect x="745" y="454" width="42" height="38" fill="#7c7c7c" transform="rotate(54 766 473)"/><rect x="855" y="296" width="42" height="30" fill="#c6c6c6" transform="rotate(50 876 311)"/><rect x="372" y="498" width="63" height="52" fill="#8a8a8a" transform="rotate(49 403 524)"/><rect x="328" y="700" width="53" height="18" fill="#c6c6c6" transform="rotate(143 354 709)"/><rect x="367" y="699" width="74" height="23" fill="#959595" transform="rotate(52 404 710)"/><rect x="404" y="252" width="64" height="34" fill="#959595" transform="rotate(56 436 269)"/><rect x="900" y="869" width="77" height="27" fill="#8a8a8a" transform="rotate(49 938 882)"/><rect x="353" y="798" width="66" height="42" fill="#7c7c7c" transform="rotate(140 386 819)"/><rect x="424" y="737" width="83" height="19" fill="#8a8a8a" transform="rotate(52 465 747)"/><rect x="788" y="495" width="37" height="19" fill="#959595" transform="rotate(56 806 504)"/><rect x="347" y="144" width="89" height="21" fill="#7c7c7c" transform="rotate(143 392 154)"/><rect x="567" y="749" width="89" height="34" fill="#c6c6c6" transform="rotate(55 611 766)"/><rect x="559" y="693" width="66" height="34" fill="#7c7c7c" transform="rotate(52 592 710)"/><rect x="779" y="414" width="44" height="19" fill="#c6c6c6" transform="rotate(52 801 424)"/><rect x="918" y="108" width="64" height="39" fill="#c6c6c6" transform="rotate(54 950 128)"/><rect x="882" y="753" width="71" height="37" fill="#c6c6c6" transform="rotate(140 917 771)"/><rect x="363" y="527" width="49" height="47" fill="#6f6f6f" transform="rotate(51 387 550)"/><rect x="598" y="303" width="41" height="26" fill="#b8b8b8" transform="rotate(48 618 316)"/><rect x="700" y="641" width="42" height="25" fill="#6f6f6f" transform="rotate(51 721 654)"/><rect x="729" y="464" width="45" height="45" fill="#959595" transform="rotate(48 751 486)"/><rect x="661" y="785" width="46" height="23" fill="#959595" transform="rotate(50 683 796)"/><rect x="237" y="388" width="72" height="24" fill="#6f6f6f" transform="rotate(50 274 401)"/><rect x="905" y="84" width="43" height="53" fill="#c6c6c6" transform="rotate(145 926 110)"/><rect x="534" y="568" width="69" height="31" fill="#7c7c7c" transform="rotate(139 569 583)"/><rect x="775" y="728" width="89" height="26" fill="#6f6f6f" transform="rotate(50 820 741)"/><rect x="866" y="497" width="54" height="45" fill="#8a8a8a" transform="rotate(53 893 520)"/><rect x="822" y="476" width="49" height="19" fill="#c6c6c6" transform="rotate(48 847 486)"/><rect x="865" y="427" width="48" height="33" fill="#6f6f6f" transform="rotate(54 889 443)"/><rect x="489" y="177" width="83" height="45" fill="#7c7c7c" transform="rotate(56 531 199)"/><rect x="391" y="730" width="55" height="51" fill="#6f6f6f" transform="rotate(54 419 755)"/><rect x="264" y="203" width="60" height="54" fill="#8a8a8a" transform="rotate(50 293 229)"/><rect x="791" y="806" width="44" height="49" fill="#c6c6c6" transform="rotate(49 813 831)"/><rect x="575" y="404" width="46" height="45" fill="#959595" transform="rotate(55 598 427)"/><rect x="808" y="638" width="50" height="22" fill="#7c7c7c" transform="rotate(145 833 649)"/><rect x="248" y="497" width="85" height="28" fill="#b8b8b8" transform="rotate(51 290 511)"/><rect x="876" y="603" width="80" height="17" fill="#959595" transform="rotate(142 916 611)"/><rect x="496" y="702" width="74" height="51" fill="#959595" transform="rotate(51 533 727)"/><rect x="613" y="689" width="57" height="20" fill="#c6c6c6" transform="rotate(55 642 699)"/><rect x="837" y="110" width="53" height="24" fill="#6f6f6f" transform="rotate(56 864 122)"/><rect x="524" y="270" width="46" height="32" fill="#959595" transform="rotate(141 547 286)"/><rect x="359" y="185" width="46" height="50" fill="#8a8a8a" transform="rotate(54 381 210)"/><rect x="303" y="678" width="46" height="45" fill="#b8b8b8" transform="rotate(49 326 700)"/><rect x="285" y="696" width="63" height="34" fill="#6f6f6f" transform="rotate(54 317 713)"/><rect x="557" y="53" width="66" height="27" fill="#6f6f6f" transform="rotate(54 590 66)"/><rect x="301" y="607" width="67" height="48" fill="#8a8a8a" transform="rotate(50 335 631)"/><rect x="601" y="683" width="66" height="36" fill="#c6c6c6" transform="rotate(54 634 701)"/><rect x="670" y="149" width="71" height="21" fill="#c6c6c6" transform="rotate(51 706 159)"/><rect x="901" y="142" width="61" height="42" fill="#c6c6c6" transform="rotate(54 931 163)"/></g>
<rect x="12" y="12" width="945" height="872" filter="url(#nz3)" opacity=".26"/><rect x="12" y="12" width="945" height="872" filter="url(#nw3)" opacity=".24"/>
<polygon points="30,12 110,12 100,60 50,60" fill="#9bd67a" />
<rect x="185" y="50" width="55" height="50" fill="#b0df94" />
<polygon points="350,160 400,175 446,236 426,250 330,196" fill="#9bd67a" />
<rect x="620" y="158" width="46" height="32" fill="#9bd67a" />
<polygon points="665,20 710,12 722,66 690,76" fill="#9bd67a" />
<polygon points="430,380 575,330 580,345 436,394" fill="#9bd67a" />
<rect x="500" y="425" width="36" height="25" fill="#9bd67a" />
<polygon points="650,398 672,395 678,428 655,432" fill="#9bd67a" />
<polygon points="380,580 550,525 556,556 442,600 402,642" fill="#9bd67a" />
<polygon points="540,740 590,715 652,820 602,870 552,885 520,862 500,792" fill="#9bd67a" />
<rect x="540" y="680" width="26" height="26" fill="#9bd67a" />
<polygon points="850,372 900,366 930,430 880,470 832,452 742,512 700,500 730,470" fill="#9bd67a" opacity=".85"/>
<polygon points="880,470 930,430 955,455 955,560 905,575 852,532" fill="#b0df94" opacity=".8"/>
<polygon points="832,682 858,680 862,750 840,748" fill="#9bd67a" />
<ellipse cx="860" cy="792" rx="22" ry="17" fill="#9bd67a"/>
<polygon points="820,295 845,288 858,325 835,332" fill="#9bd67a" />
<rect x="232" y="352" width="38" height="48" fill="#9bd67a" />
<rect x="545" y="92" width="23" height="20" fill="#9bd67a" />
<rect x="355" y="330" width="27" height="22" fill="#9bd67a" />
<rect x="565" y="205" width="17" height="17" fill="#9bd67a" />
<rect x="700" y="255" width="20" height="17" fill="#9bd67a" />
<rect x="320" y="125" width="20" height="20" fill="#9bd67a" />
<rect x="270" y="425" width="26" height="15" fill="#9bd67a" />
<rect x="600" y="655" width="22" height="17" fill="#9bd67a" />
<rect x="800" y="760" width="18" height="20" fill="#9bd67a" />
<rect x="845" y="830" width="27" height="25" fill="#9bd67a" />
<rect x="640" y="860" width="40" height="25" fill="#9bd67a" />
<rect x="820" y="42" width="18" height="14" fill="#9bd67a" />
<rect x="895" y="800" width="20" height="30" fill="#9bd67a" />
<polygon points="370,12 512,12 456,92 386,126 320,76 400,46" fill="#0f9c3d" />
<polygon points="230,182 296,146 336,166 272,216 236,212" fill="#0f9c3d" />
<polygon points="300,212 396,215 392,242 305,238" fill="#0f9c3d" />
<polygon points="315,536 380,515 386,532 330,556" fill="#0f9c3d" />
<rect x="338" y="210" width="24" height="22" fill="#0f9c3d" />
<polygon points="642,522 700,517 708,556 666,572 640,548" fill="#e6cfb0" />
<polygon points="12,12 32,12 45,70 92,236 136,226 152,310 216,346 262,420 322,540 352,612 402,692 462,792 532,885 500,885 12,400" fill="#badcc5" />
<polygon points="12,110 40,150 90,240 100,300 160,400 240,510 300,610 380,700 440,800 500,885 200,885 150,790 100,700 60,640 12,600" fill="#6ba9dd" />
<polygon points="50,480 92,490 132,596 110,602 55,532" fill="#badcc5" />
<polygon points="265,640 312,640 366,762 356,802 310,762" fill="#badcc5" />
<polygon points="12,140 30,160 42,230 12,200" fill="#badcc5" />
<path d="M12 385 L350 885" stroke="#8fb6dc" stroke-width="2" fill="none" />
<polygon points="12,610 60,650 150,800 196,885 12,885" fill="#aad492" />
<polygon points="45,660 92,692 142,792 152,832 100,812 40,702" fill="#93c6ee" />
<polygon points="12,760 60,820 90,885 12,885" fill="#93c6ee" />
<path d="M500 12 L440 60 L400 100 L330 150 L260 190 L215 215 L140 222" stroke="#3fa3d4" stroke-width="5" fill="none" />
<polygon points="125,230 285,240 285,280 410,285 410,326 280,326 276,352 200,352 150,300 130,266" fill="#e9adad" />
<polygon points="125,230 285,240 285,326 276,352 200,352 150,300 130,266" fill="#df888b" />
<path d="M150 230 V352 M177 230 V352 M204 230 V352 M231 230 V352 M258 230 V352 M285 230 V352 M312 230 V352 M339 230 V352 M366 230 V352 M393 230 V352 M125 258 H410 M125 284 H410 M125 312 H410" stroke="#cdbaba" stroke-width="4.5" opacity=".9" clip-path="url(#pk3)"/>
<rect x="358" y="602" width="34" height="38" fill="#0b0b0b" rx="4"/>
<rect x="450" y="735" width="30" height="35" fill="#0b0b0b" rx="4"/>
<rect x="480" y="772" width="40" height="28" fill="#0b0b0b" rx="4"/>
<rect x="495" y="800" width="50" height="30" fill="#0b0b0b" rx="4"/>
<rect x="200" y="330" width="22" height="20" fill="#0b0b0b" rx="4"/>
<rect x="265" y="395" width="17" height="17" fill="#0b0b0b" rx="4"/>
<rect x="620" y="842" width="20" height="20" fill="#0b0b0b" rx="4"/>
<rect x="300" y="462" width="14" height="14" fill="#0b0b0b" rx="4"/>
<rect x="565" y="650" width="15" height="14" fill="#0b0b0b" rx="4"/>
<rect x="860" y="340" width="15" height="16" fill="#0b0b0b" rx="4"/>
<rect x="470" y="588" width="14" height="12" fill="#0b0b0b" rx="4"/>
<rect x="730" y="80" width="18" height="12" fill="#0b0b0b" rx="4"/>
<rect x="412" y="488" width="12" height="12" fill="#0b0b0b" rx="4"/>
<rect x="390" y="600" width="26" height="30" fill="#f2f2f2" />
<rect x="520" y="770" width="28" height="30" fill="#ededed" />
<rect x="462" y="735" width="24" height="17" fill="#ededed" />
<path d="M795 520 L900 430" stroke="#0b0b0b" stroke-width="9" fill="none" stroke-dasharray="14 5"/>
<rect x="412" y="280" width="28" height="32" fill="#e6e6e6" />
<path d="M455 75 L850 580" stroke="#e6e6e6" stroke-width="5" fill="none" />
<path d="M60 60 L130 200" stroke="#e0e0e0" stroke-width="3" fill="none" />
<path d="M180 12 L190 210" stroke="#d8d8d8" stroke-width="3" fill="none" />
<path d="M285 240 L300 120 L290 12" stroke="#d0d0d0" stroke-width="2" fill="none" />
<path d="M730 885 L955 730" stroke="#58b878" stroke-width="3" fill="none" />
<path d="M870 885 L955 810" stroke="#6fb0e0" stroke-width="3" fill="none" />
<path d="M955 12 L935 200 L955 420" stroke="#d8d8d8" stroke-width="4" fill="none" />
</g>
</g>
</svg>
<!--M3E--></div>
    <svg class="abs" style="left:9px;top:187.1px" width="172" height="34" viewBox="0 0 172 34">
      <text x="20.9" y="16.0" font-family="Liberation Sans, sans-serif" font-size="16.2" fill="#2a2a2a" textLength="58.8" lengthAdjust="spacingAndGlyphs">MUNICIPIO DE</text>
      <text x="83.8" y="16.0" font-family="Liberation Sans, sans-serif" font-size="16.2" font-weight="bold" fill="#0d0d0d" stroke="#0d0d0d" stroke-width=".5" textLength="76.8" lengthAdjust="spacingAndGlyphs">SAN ANTONIO</text>
      <circle cx="71.9" cy="24.3" r="2.4" fill="#1f5d6c"/>
      <text x="77.6" y="26.8" font-family="Liberation Sans, sans-serif" font-size="6.9" fill="#8c8c8c" textLength="83.0" lengthAdjust="spacingAndGlyphs">FICHA TÉCNICA MUNICIPAL</text>
    </svg>
    <div class="cat" style="left:195px;top:34px">ORDENAMIENTO TERRITORIAL</div>
    <div class="ttl" style="left:192.6px;top:71.2px;transform:scaleX(1.045)">Ficha Municipal – San Antonio</div>
    <div class="rsp" style="left:192.6px;top:119px;transform:scaleX(.99)">Responsable:</div>
    <div class="rsp" style="left:304.2px;top:119px;transform:scaleX(.943)">STP, FMAM &amp; PNUD</div>
    <div class="btn" style="left:202px;top:169px"><svg width="12" height="15" viewBox="0 0 12 15"><path d="M1.6 .5 H7.4 L11.5 4.6 V13.4 Q11.5 14.5 10.4 14.5 H1.6 Q.5 14.5 .5 13.4 V1.6 Q.5 .5 1.6 .5 Z" fill="#fff"/><path d="M7.2 .6 V4.8 H11.4" fill="none" stroke="#a9d4e2" stroke-width="1"/><path d="M6 6.2 V11.4 M3.8 9.4 L6 11.6 L8.2 9.4" stroke="#a9d4e2" stroke-width="1.3" fill="none"/></svg><span>Ver y descargar</span></div>
  </div>
  <div class="card" style="left:801px;top:448px" id="c4">
    <div class="mapwrap" style="left:9px;top:24px;height:153px"><!--M4S-->
<svg width="170" height="153" viewBox="0 0 170 153" style="display:block">
<defs>
<filter id="nz4" x="0" y="0" width="100%" height="100%"><feTurbulence type="fractalNoise" baseFrequency="0.55" numOctaves="2" seed="31"/><feColorMatrix type="matrix" values="0 0 0 0 0  0 0 0 0 0  0 0 0 0 0  1.6 0 0 0 -0.45"/></filter>
<filter id="nw4" x="0" y="0" width="100%" height="100%"><feTurbulence type="fractalNoise" baseFrequency="0.5" numOctaves="2" seed="31"/><feColorMatrix type="matrix" values="0 0 0 0 1  0 0 0 0 1  0 0 0 0 1  0 1.6 0 0 -0.5"/></filter>
<filter id="bl4"><feGaussianBlur stdDeviation="0.35"/></filter>
<clipPath id="cp4"><rect width="170" height="153"/></clipPath>
<pattern id="g4a" width="36" height="24" patternUnits="userSpaceOnUse" patternTransform="rotate(-38)"><rect width="30" height="18" fill="#747474"/></pattern><pattern id="g4b" width="30" height="22" patternUnits="userSpaceOnUse" patternTransform="rotate(12)"><rect width="24" height="16" fill="#848484"/></pattern><pattern id="g4c" width="32" height="22" patternUnits="userSpaceOnUse" patternTransform="rotate(-14)"><rect width="26" height="16" fill="#808080"/></pattern><pattern id="g4d" width="28" height="22" patternUnits="userSpaceOnUse" patternTransform="rotate(4)"><rect width="22" height="16" fill="#787878"/></pattern><pattern id="g4e" width="34" height="22" patternUnits="userSpaceOnUse" patternTransform="rotate(-28)"><rect width="28" height="16" fill="#7a7a7a"/></pattern><clipPath id="pk4"><polygon points="480,430 545,432 545,450 600,450 616,415 770,415 740,482 660,486 580,480 420,496 432,460"/></clipPath></defs>
<g clip-path="url(#cp4)" filter="url(#bl4)">
<rect width="170" height="153" fill="#a4a4a4"/>
<g transform="scale(0.17452) translate(-12,-12)">
<polygon points="12,12 400,12 12,300" fill="url(#g4a)" opacity="0.55"/>
<polygon points="12,330 330,100 660,12 985,12 985,300 600,330 200,380" fill="url(#g4b)" opacity="0.4"/>
<polygon points="150,380 985,300 985,600 500,640 150,600" fill="url(#g4c)" opacity="0.45"/>
<polygon points="480,700 780,700 760,888 500,888" fill="url(#g4d)" opacity="0.5"/>
<polygon points="780,420 985,300 985,640 800,740" fill="url(#g4e)" opacity="0.5"/>
<g opacity="0.3"><rect x="366" y="194" width="32" height="39" fill="#c6c6c6" transform="rotate(15 383 214)"/><rect x="360" y="635" width="51" height="36" fill="#959595" transform="rotate(15 385 653)"/><rect x="134" y="135" width="58" height="17" fill="#959595" transform="rotate(12 163 143)"/><rect x="565" y="374" width="38" height="34" fill="#7c7c7c" transform="rotate(17 584 391)"/><rect x="118" y="579" width="31" height="39" fill="#959595" transform="rotate(11 134 599)"/><rect x="295" y="546" width="52" height="18" fill="#7c7c7c" transform="rotate(14 321 555)"/><rect x="103" y="78" width="26" height="32" fill="#b8b8b8" transform="rotate(11 116 94)"/><rect x="114" y="401" width="58" height="25" fill="#959595" transform="rotate(15 143 414)"/><rect x="849" y="578" width="39" height="17" fill="#7c7c7c" transform="rotate(17 869 586)"/><rect x="644" y="737" width="63" height="42" fill="#959595" transform="rotate(18 676 758)"/><rect x="400" y="620" width="29" height="28" fill="#c6c6c6" transform="rotate(19 414 634)"/><rect x="218" y="379" width="58" height="33" fill="#b8b8b8" transform="rotate(102 247 395)"/><rect x="629" y="477" width="67" height="20" fill="#b8b8b8" transform="rotate(17 662 487)"/><rect x="599" y="689" width="38" height="26" fill="#7c7c7c" transform="rotate(15 618 702)"/><rect x="197" y="200" width="46" height="20" fill="#8a8a8a" transform="rotate(15 220 210)"/><rect x="102" y="330" width="57" height="37" fill="#b8b8b8" transform="rotate(15 131 349)"/><rect x="464" y="844" width="65" height="37" fill="#7c7c7c" transform="rotate(16 496 862)"/><rect x="904" y="555" width="48" height="32" fill="#8a8a8a" transform="rotate(107 928 571)"/><rect x="751" y="60" width="48" height="30" fill="#6f6f6f" transform="rotate(16 775 75)"/><rect x="890" y="797" width="39" height="17" fill="#b8b8b8" transform="rotate(18 909 806)"/><rect x="832" y="246" width="51" height="21" fill="#b8b8b8" transform="rotate(12 857 257)"/><rect x="446" y="379" width="47" height="39" fill="#6f6f6f" transform="rotate(13 469 399)"/><rect x="450" y="495" width="42" height="31" fill="#959595" transform="rotate(17 471 511)"/><rect x="602" y="354" width="47" height="40" fill="#c6c6c6" transform="rotate(14 625 373)"/><rect x="2" y="145" width="53" height="24" fill="#7c7c7c" transform="rotate(101 28 157)"/><rect x="800" y="232" width="26" height="35" fill="#959595" transform="rotate(14 813 249)"/><rect x="167" y="457" width="51" height="33" fill="#b8b8b8" transform="rotate(16 193 474)"/><rect x="697" y="165" width="33" height="27" fill="#959595" transform="rotate(101 713 178)"/><rect x="283" y="264" width="61" height="29" fill="#6f6f6f" transform="rotate(107 314 279)"/><rect x="360" y="697" width="29" height="23" fill="#6f6f6f" transform="rotate(18 374 708)"/><rect x="166" y="133" width="29" height="37" fill="#6f6f6f" transform="rotate(18 180 151)"/><rect x="300" y="725" width="34" height="39" fill="#959595" transform="rotate(18 317 745)"/><rect x="883" y="838" width="37" height="38" fill="#6f6f6f" transform="rotate(19 902 856)"/><rect x="715" y="759" width="60" height="35" fill="#b8b8b8" transform="rotate(106 745 777)"/><rect x="635" y="538" width="57" height="29" fill="#8a8a8a" transform="rotate(17 663 552)"/><rect x="23" y="235" width="27" height="37" fill="#6f6f6f" transform="rotate(13 37 254)"/><rect x="894" y="261" width="38" height="14" fill="#6f6f6f" transform="rotate(12 913 268)"/><rect x="836" y="480" width="57" height="24" fill="#8a8a8a" transform="rotate(18 865 491)"/><rect x="393" y="823" width="45" height="32" fill="#7c7c7c" transform="rotate(11 415 839)"/><rect x="583" y="14" width="47" height="33" fill="#c6c6c6" transform="rotate(108 607 31)"/><rect x="588" y="856" width="58" height="31" fill="#b8b8b8" transform="rotate(15 617 872)"/><rect x="692" y="770" width="65" height="15" fill="#959595" transform="rotate(12 724 778)"/><rect x="641" y="240" width="69" height="24" fill="#7c7c7c" transform="rotate(16 676 252)"/><rect x="580" y="68" width="67" height="39" fill="#c6c6c6" transform="rotate(104 613 88)"/><rect x="436" y="317" width="68" height="40" fill="#c6c6c6" transform="rotate(16 470 337)"/><rect x="259" y="163" width="69" height="20" fill="#6f6f6f" transform="rotate(105 293 173)"/><rect x="82" y="452" width="32" height="37" fill="#7c7c7c" transform="rotate(17 98 471)"/><rect x="243" y="682" width="61" height="41" fill="#8a8a8a" transform="rotate(19 273 702)"/><rect x="143" y="306" width="25" height="27" fill="#7c7c7c" transform="rotate(15 156 320)"/><rect x="893" y="689" width="54" height="15" fill="#6f6f6f" transform="rotate(13 920 697)"/><rect x="71" y="775" width="29" height="17" fill="#7c7c7c" transform="rotate(17 86 784)"/><rect x="224" y="188" width="47" height="21" fill="#6f6f6f" transform="rotate(105 248 198)"/><rect x="415" y="794" width="60" height="31" fill="#6f6f6f" transform="rotate(19 446 810)"/><rect x="12" y="132" width="45" height="26" fill="#8a8a8a" transform="rotate(108 34 145)"/><rect x="887" y="206" width="41" height="16" fill="#6f6f6f" transform="rotate(13 908 214)"/><rect x="212" y="290" width="67" height="28" fill="#c6c6c6" transform="rotate(107 245 304)"/><rect x="631" y="516" width="67" height="30" fill="#c6c6c6" transform="rotate(103 664 531)"/><rect x="87" y="380" width="43" height="16" fill="#7c7c7c" transform="rotate(17 108 388)"/><rect x="556" y="171" width="68" height="23" fill="#b8b8b8" transform="rotate(17 590 183)"/><rect x="859" y="254" width="43" height="25" fill="#959595" transform="rotate(13 880 266)"/></g>
<g opacity="0.6"><rect x="645" y="618" width="54" height="28" fill="#707070" transform="rotate(6 672 632)"/><rect x="717" y="626" width="61" height="21" fill="#6e6e6e" transform="rotate(5 748 636)"/><rect x="452" y="625" width="72" height="39" fill="#6e6e6e" transform="rotate(96 488 644)"/><rect x="683" y="609" width="80" height="44" fill="#7a7a7a" transform="rotate(2 723 630)"/><rect x="745" y="642" width="45" height="23" fill="#7a7a7a" transform="rotate(7 767 654)"/><rect x="655" y="651" width="89" height="33" fill="#707070" transform="rotate(8 699 668)"/><rect x="631" y="668" width="69" height="44" fill="#6e6e6e" transform="rotate(7 666 690)"/><rect x="734" y="673" width="83" height="33" fill="#7a7a7a" transform="rotate(2 776 690)"/><rect x="549" y="655" width="75" height="43" fill="#6e6e6e" transform="rotate(5 587 677)"/><rect x="527" y="637" width="53" height="51" fill="#707070" transform="rotate(6 553 662)"/><rect x="707" y="674" width="51" height="21" fill="#7a7a7a" transform="rotate(93 733 684)"/><rect x="501" y="681" width="84" height="31" fill="#707070" transform="rotate(94 543 696)"/><rect x="728" y="648" width="53" height="28" fill="#707070" transform="rotate(7 754 662)"/><rect x="579" y="644" width="58" height="54" fill="#6e6e6e" transform="rotate(92 609 671)"/><rect x="458" y="614" width="71" height="47" fill="#7a7a7a" transform="rotate(4 494 638)"/><rect x="632" y="643" width="53" height="39" fill="#6e6e6e" transform="rotate(6 659 663)"/><rect x="605" y="637" width="72" height="24" fill="#7a7a7a" transform="rotate(5 641 649)"/><rect x="740" y="673" width="53" height="37" fill="#6e6e6e" transform="rotate(8 766 691)"/><rect x="534" y="662" width="70" height="25" fill="#6e6e6e" transform="rotate(6 570 675)"/><rect x="598" y="611" width="58" height="54" fill="#7a7a7a" transform="rotate(1 627 638)"/></g>
<g opacity="0.7"><rect x="182" y="800" width="20" height="18" fill="#e0e0e0" transform="rotate(91 192 809)"/><rect x="357" y="785" width="35" height="22" fill="#8a8a8a" transform="rotate(87 375 796)"/><rect x="438" y="813" width="28" height="10" fill="#8a8a8a" transform="rotate(2 452 817)"/><rect x="354" y="787" width="35" height="16" fill="#e0e0e0" transform="rotate(-3 371 795)"/><rect x="187" y="767" width="25" height="9" fill="#e0e0e0" transform="rotate(-3 200 772)"/><rect x="356" y="808" width="46" height="15" fill="#8a8a8a" transform="rotate(-3 379 815)"/><rect x="183" y="776" width="46" height="14" fill="#7a7a7a" transform="rotate(4 206 782)"/><rect x="340" y="755" width="32" height="25" fill="#d0d0d0" transform="rotate(86 357 768)"/><rect x="480" y="797" width="18" height="10" fill="#e0e0e0" transform="rotate(1 489 802)"/><rect x="263" y="798" width="30" height="21" fill="#7a7a7a" transform="rotate(-3 278 808)"/><rect x="424" y="814" width="19" height="8" fill="#d0d0d0" transform="rotate(2 433 818)"/><rect x="320" y="812" width="40" height="26" fill="#8a8a8a" transform="rotate(2 339 826)"/><rect x="186" y="766" width="48" height="17" fill="#8a8a8a" transform="rotate(1 210 774)"/><rect x="296" y="812" width="29" height="9" fill="#7a7a7a" transform="rotate(2 311 816)"/><rect x="465" y="801" width="49" height="12" fill="#7a7a7a" transform="rotate(4 489 807)"/><rect x="435" y="778" width="17" height="19" fill="#e0e0e0" transform="rotate(-4 443 787)"/><rect x="432" y="810" width="46" height="19" fill="#e0e0e0" transform="rotate(-2 455 819)"/><rect x="211" y="810" width="20" height="8" fill="#7a7a7a" transform="rotate(1 222 813)"/><rect x="304" y="781" width="19" height="12" fill="#e0e0e0" transform="rotate(-1 313 786)"/><rect x="342" y="791" width="20" height="13" fill="#7a7a7a" transform="rotate(-3 352 798)"/></g>
<rect x="12" y="12" width="974" height="877" filter="url(#nz4)" opacity=".26"/><rect x="12" y="12" width="974" height="877" filter="url(#nw4)" opacity=".24"/>
<polygon points="12,385 80,395 140,450 140,560 100,602 12,612" fill="#e4e4e4" />
<polygon points="12,580 160,590 166,652 480,682 500,762 182,752 182,830 250,830 270,888 200,888 12,888" fill="#9bd67a" />
<polygon points="250,830 600,850 600,888 270,888" fill="#a4c896" />
<polygon points="280,490 402,490 342,582 272,586 266,616 185,616 222,540 272,536" fill="#9bd67a" />
<polygon points="410,500 662,495 656,552 532,572 482,546 400,542" fill="#9bd67a" />
<polygon points="560,330 666,325 612,426 545,426" fill="#9bd67a" />
<polygon points="692,202 748,198 752,250 700,252" fill="#9bd67a" />
<polygon points="775,245 846,240 822,292 750,292" fill="#b0df94" />
<polygon points="765,296 812,296 800,366 748,362" fill="#b0df94" />
<rect x="815" y="325" width="55" height="31" fill="#b0df94" />
<rect x="890" y="345" width="42" height="17" fill="#b0df94" />
<rect x="830" y="565" width="66" height="41" fill="#9bd67a" />
<polygon points="835,680 880,675 870,716 830,716" fill="#9bd67a" />
<polygon points="742,462 776,460 770,486 738,486" fill="#9bd67a" />
<rect x="860" y="12" width="42" height="30" fill="#9bd67a" />
<polygon points="935,62 985,58 985,96 940,96" fill="#9bd67a" />
<polygon points="800,745 985,640 985,888 760,888 790,800" fill="#b4d8a0" opacity=".45"/>
<polygon points="905,760 935,750 975,870 945,880" fill="#b0df94" />
<polygon points="820,760 850,750 830,830 800,830" fill="#b0df94" />
<rect x="310" y="25" width="35" height="30" fill="#9bd67a" />
<rect x="20" y="320" width="35" height="52" fill="#9bd67a" />
<rect x="685" y="765" width="17" height="25" fill="#9bd67a" />
<rect x="430" y="610" width="32" height="22" fill="#9bd67a" />
<rect x="830" y="150" width="16" height="18" fill="#9bd67a" />
<rect x="545" y="800" width="17" height="18" fill="#9bd67a" />
<rect x="340" y="300" width="16" height="50" fill="#b0df94" opacity=".7"/>
<polygon points="40,660 160,655 160,745 80,745" fill="none" stroke="#e8f2e0" stroke-width="4"/>
<polygon points="510,330 560,330 560,345 535,345 535,368 560,368 560,385 545,385 545,450 450,450 465,415" fill="#0f9c3d" />
<rect x="390" y="415" width="66" height="35" fill="#0f9c3d" />
<rect x="555" y="430" width="37" height="26" fill="#0f9c3d" />
<rect x="780" y="380" width="72" height="30" fill="#0f9c3d" />
<polygon points="230,375 302,380 276,452 185,456" fill="#0f9c3d" />
<polygon points="230,375 255,377 215,455 185,456" fill="#5fbf4e" />
<polygon points="410,12 500,12 500,72 460,86" fill="#0f9c3d" />
<polygon points="320,86 360,65 442,176 410,212 370,160" fill="#0f9c3d" />
<path d="M12 360 L60 290 L130 225 L240 145 L330 102 L460 86 L560 42 L660 12" stroke="#0f9c3d" stroke-width="14" fill="none" stroke-dasharray="60 14 30 10"/>
<polygon points="100,215 150,200 160,250 110,270" fill="#0f9c3d" />
<polygon points="12,320 30,300 40,360 12,380" fill="#0f9c3d" />
<rect x="565" y="85" width="51" height="51" fill="#0f9c3d" />
<rect x="528" y="105" width="22" height="21" fill="#0f9c3d" />
<polygon points="880,46 912,40 918,70 886,76" fill="#0f9c3d" />
<rect x="955" y="12" width="30" height="28" fill="#0f9c3d" />
<path d="M985 605 L940 680 L860 722 L790 762 L752 850 L730 888" stroke="#0f9c3d" stroke-width="10" fill="none" stroke-dasharray="50 12 24 10"/>
<polygon points="910,710 935,700 945,745 920,750" fill="#0f9c3d" />
<path d="M12 330 L60 285 L130 215 L240 140 L330 98 L460 82 L560 38 L660 12" stroke="#2fa0b8" stroke-width="3" fill="none" />
<path d="M660 12 L700 40 L760 20" stroke="#3fa3d4" stroke-width="2" fill="none" />
<path d="M985 612 L940 685 L860 728 L790 768" stroke="#2fa0b8" stroke-width="3" fill="none" />
<path d="M600 500 L700 610 L790 768" stroke="#7ab4d8" stroke-width="2" fill="none" />
<polygon points="12,600 80,740 150,830 200,888 160,888 110,800 60,730 12,650" fill="#badcc5" />
<polygon points="12,650 60,730 110,800 160,888 12,888" fill="#6ba9dd" />
<polygon points="480,430 545,432 545,450 600,450 616,415 770,415 740,482 660,486 580,480 420,496 432,460" fill="#e79fa0" />
<polygon points="600,450 616,415 770,415 740,482 660,486 600,480" fill="#ee9fa2" />
<path d="M440 415 V496 M466 415 V496 M492 415 V496 M518 415 V496 M544 415 V496 M570 415 V496 M596 415 V496 M622 415 V496 M648 415 V496 M674 415 V496 M700 415 V496 M726 415 V496 M752 415 V496 M420 438 H770 M420 462 H770" stroke="#d8c6c6" stroke-width="3.5" opacity=".8" clip-path="url(#pk4)"/>
<rect x="605" y="30" width="31" height="26" fill="#0b0b0b" rx="4"/>
<rect x="660" y="205" width="22" height="40" fill="#0b0b0b" rx="4"/>
<rect x="680" y="245" width="16" height="31" fill="#0b0b0b" rx="4"/>
<rect x="540" y="470" width="40" height="18" fill="#0b0b0b" rx="4"/>
<rect x="670" y="460" width="22" height="13" fill="#0b0b0b" rx="4"/>
<rect x="300" y="845" width="20" height="25" fill="#0b0b0b" rx="4"/>
<rect x="310" y="535" width="28" height="15" fill="#0b0b0b" rx="4"/>
<rect x="290" y="580" width="40" height="10" fill="#0b0b0b" rx="4"/>
<rect x="808" y="458" width="14" height="12" fill="#0b0b0b" rx="4"/>
<rect x="345" y="650" width="13" height="12" fill="#0b0b0b" rx="4"/>
<rect x="848" y="572" width="14" height="10" fill="#0b0b0b" rx="4"/>
<rect x="630" y="500" width="20" height="25" fill="#0b0b0b" rx="4"/>
<polygon points="335,515 355,508 372,520 350,552 335,548" fill="#0b0b0b" />
<polygon points="265,548 345,545 345,585 265,585" fill="#e2e2e2" />
<rect x="290" y="578" width="42" height="12" fill="#0b0b0b" rx="3"/>
<rect x="308" y="533" width="28" height="16" fill="#0b0b0b" rx="3"/>
<rect x="65" y="518" width="10" height="12" fill="#222" rx="2"/>
<rect x="115" y="452" width="10" height="12" fill="#222" rx="2"/>
<rect x="45" y="425" width="10" height="12" fill="#222" rx="2"/>
<rect x="33" y="422" width="10" height="12" fill="#222" rx="2"/>
<rect x="37" y="512" width="10" height="12" fill="#222" rx="2"/>
<rect x="129" y="545" width="10" height="12" fill="#222" rx="2"/>
<rect x="62" y="493" width="10" height="12" fill="#222" rx="2"/>
<rect x="96" y="479" width="10" height="12" fill="#222" rx="2"/>
<rect x="28" y="571" width="10" height="12" fill="#222" rx="2"/>
<rect x="88" y="440" width="10" height="12" fill="#222" rx="2"/>
<rect x="28" y="437" width="10" height="12" fill="#222" rx="2"/>
<rect x="125" y="439" width="10" height="12" fill="#222" rx="2"/>
<rect x="89" y="595" width="10" height="12" fill="#222" rx="2"/>
<rect x="24" y="489" width="10" height="12" fill="#222" rx="2"/>
<rect x="73" y="585" width="10" height="12" fill="#222" rx="2"/>
<rect x="41" y="467" width="10" height="12" fill="#222" rx="2"/>
<rect x="47" y="429" width="10" height="12" fill="#222" rx="2"/>
<rect x="94" y="567" width="10" height="12" fill="#222" rx="2"/>
<rect x="68" y="427" width="10" height="12" fill="#222" rx="2"/>
<rect x="98" y="553" width="10" height="12" fill="#222" rx="2"/>
<rect x="92" y="479" width="10" height="12" fill="#222" rx="2"/>
<rect x="111" y="534" width="10" height="12" fill="#222" rx="2"/>
<path d="M12 300 L200 152 L400 12" stroke="#e8e8e8" stroke-width="5" fill="none" />
<path d="M400 495 L350 300 L330 200" stroke="#c8c8c8" stroke-width="2" fill="none" />
<path d="M660 330 L530 570" stroke="#dedede" stroke-width="3" fill="none" />
<path d="M400 415 L420 500" stroke="#e0e0e0" stroke-width="3" fill="none" />
<path d="M160 655 L480 682" stroke="#e6efe0" stroke-width="3" fill="none" />
<path d="M480 682 L520 800" stroke="#e2e2e2" stroke-width="3" fill="none" />
<path d="M860 240 L780 420" stroke="#cfcfcf" stroke-width="2" fill="none" />
</g>
</g>
</svg>
<!--M4E--></div>
    <svg class="abs" style="left:9px;top:184.9px" width="172" height="34" viewBox="0 0 172 34">
      <text x="34.2" y="16.0" font-family="Liberation Sans, sans-serif" font-size="16.2" fill="#2a2a2a" textLength="60.4" lengthAdjust="spacingAndGlyphs">MUNICIPIO DE</text>
      <text x="98.7" y="16.0" font-family="Liberation Sans, sans-serif" font-size="16.2" font-weight="bold" fill="#0d0d0d" stroke="#0d0d0d" stroke-width=".5" textLength="63.7" lengthAdjust="spacingAndGlyphs">VILLA ELISA</text>
      <circle cx="72.2" cy="24.5" r="2.4" fill="#1f5d6c"/>
      <text x="77.5" y="26.8" font-family="Liberation Sans, sans-serif" font-size="6.9" fill="#8c8c8c" textLength="84.9" lengthAdjust="spacingAndGlyphs">FICHA TÉCNICA MUNICIPAL</text>
    </svg>
    <div class="cat" style="left:195px;top:36px">ORDENAMIENTO TERRITORIAL</div>
    <div class="ttl" style="left:192.6px;top:73.4px;transform:scaleX(1.039)">Ficha Municipal – Villa Elisa</div>
    <div class="rsp" style="left:192.6px;top:121px;transform:scaleX(.99)">Responsable:</div>
    <div class="rsp" style="left:304.2px;top:121px;transform:scaleX(.943)">STP, FMAM &amp; PNUD</div>
    <div class="btn" style="left:202px;top:171px"><svg width="12" height="15" viewBox="0 0 12 15"><path d="M1.6 .5 H7.4 L11.5 4.6 V13.4 Q11.5 14.5 10.4 14.5 H1.6 Q.5 14.5 .5 13.4 V1.6 Q.5 .5 1.6 .5 Z" fill="#fff"/><path d="M7.2 .6 V4.8 H11.4" fill="none" stroke="#a9d4e2" stroke-width="1"/><path d="M6 6.2 V11.4 M3.8 9.4 L6 11.6 L8.2 9.4" stroke="#a9d4e2" stroke-width="1.3" fill="none"/></svg><span>Ver y descargar</span></div>
  </div>

  <!-- row 3 -->
  <div class="card" style="left:288px;top:772px"></div>
  <div class="card" style="left:801px;top:772px"></div>
</div>

<!-- scrollbar -->
<div id="sb"><div id="sbthumb"></div>
  <svg class="abs" style="left:5px;top:7px" width="7" height="4" viewBox="0 0 7 4"><path d="M0 4 L3.5 0 L7 4 Z" fill="#505050"/></svg>
  <svg class="abs" style="left:5px;top:778px" width="7" height="4" viewBox="0 0 7 4"><path d="M0 0 L3.5 4 L7 0 Z" fill="#505050"/></svg>
</div>

<!-- ======= TASKBAR ======= -->
<div id="tb">
  <!-- start -->
  <svg class="abs" style="left:16px;top:12px" width="17" height="17" viewBox="0 0 17 17"><path d="M0 2.4 L7.2 1.4 V8 H0 Z M8.2 1.25 L17 0 V8 H8.2 Z M0 9 H7.2 V15.6 L0 14.6 Z M8.2 9 H17 V17 L8.2 15.75 Z" fill="#fff"/></svg>
  <div id="search">
    <svg class="abs" style="left:12px;top:10px" width="18" height="18" viewBox="0 0 18 18"><circle cx="11" cy="7" r="5.2" stroke="#222" stroke-width="1.4" fill="none"/><path d="M7.2 10.8 L1 17" stroke="#222" stroke-width="1.5"/></svg>
    <span>Escribe aquí para buscar</span>
  </div>
  <!-- task view -->
  <svg class="abs" style="left:406.9px;top:12.2px" width="20" height="17" viewBox="0 0 20 17"><path d="M.6 1.25 H11.9 M.6 15.25 H11.9 M2.1 1.25 V2.8 M11.25 1.25 V2.8 M2.1 13.7 V15.25 M11.25 13.7 V15.25" stroke="#fff" stroke-width="1.2" fill="none"/><rect x="2.1" y="5" width="9.15" height="7.5" stroke="#fff" stroke-width="1.2" fill="none"/><path d="M15.9 .6 V15.7" stroke="#fff" stroke-width="1.2"/><rect x="14.4" y="5" width="3.1" height="3.1" fill="#fff"/></svg>
  <!-- store -->
  <svg class="abs" style="left:454px;top:8px" width="26" height="25" viewBox="0 0 26 25"><path d="M7.4 6 V3.2 Q7.4 1.4 9.2 1.4 H15.8 Q17.6 1.4 17.6 3.2 V6" stroke="#2aa6e6" stroke-width="1.7" fill="none"/><path d="M2.2 4.6 H22.8 Q23.9 4.6 23.9 5.7 V20.4 Q23.9 23.9 20.4 23.9 H4.6 Q1.1 23.9 1.1 20.4 V5.7 Q1.1 4.6 2.2 4.6 Z" fill="#f3f3f3"/><rect x="7.9" y="10.1" width="4.3" height="4.3" fill="#f25022"/><rect x="13" y="10.1" width="4.3" height="4.3" fill="#7fba00"/><rect x="7.9" y="15.1" width="4.3" height="4.3" fill="#00a4ef"/><rect x="13" y="15.1" width="4.3" height="4.3" fill="#ffb900"/></svg>
  <!-- mail -->
  <svg class="abs" style="left:503.5px;top:8.5px" width="25" height="23" viewBox="0 0 25 23"><path d="M.3 7.4 L12.5 0 L24.7 7.4 V12 H.3 Z" fill="#0f63b6"/><path d="M1.6 7.6 H23.4 L12.5 15 Z" fill="#f4f4f4"/><path d="M.3 7.6 L12.5 15.4 L24.7 7.6 V22.2 H.3 Z" fill="#2ba4ea"/><path d="M12.5 15.4 L24.7 7.6 V22.2 H21 Z" fill="#1b8fe0"/><path d="M.3 22.2 L12.5 15.4 L24.7 22.2 Z" fill="#1a86d8" opacity=".55"/></svg>
  <!-- IE -->
  <svg class="abs" style="left:551px;top:7px" width="28" height="26" viewBox="0 0 28 26"><path d="M14.2 4.4 C8.6 4.4 4.6 8.4 4.6 13.6 C4.6 19 8.6 22.8 14.2 22.8 C18.4 22.8 21.8 20.6 23 17 H17.6 C17 18.2 15.8 18.8 14.3 18.8 C11.8 18.8 10.2 17.2 10 14.9 H23.6 C24 8.6 20.2 4.4 14.2 4.4 Z M10.1 11.6 C10.5 9.6 12 8.3 14.2 8.3 C16.4 8.3 17.9 9.6 18.2 11.6 Z" fill="#2fb4ee"/><path d="M3 23.4 C-.5 19 7 7 19 2.6 C24 .8 27 2 25.4 6.6 C26 3.6 23.6 3.2 19.6 4.8 C10 9 3.2 19.6 5.4 22.2 C6.4 23.4 8.6 23 11 21.8 C7.6 24.4 4.4 25 3 23.4 Z" fill="#f2c218"/></svg>
  <!-- powerpoint -->
  <svg class="abs" style="left:602px;top:8px" width="24" height="24" viewBox="0 0 24 24"><rect x="10" y="3" width="13.4" height="18" rx="1" fill="#f4e4de"/><rect x="10" y="3" width="13.4" height="18" rx="1" fill="none" stroke="#d24726" stroke-width="1.4"/><path d="M16.4 6 A4.2 4.2 0 1 0 20.6 10.2 H16.4 Z" fill="#d24726"/><path d="M17.6 4.8 A4.2 4.2 0 0 1 21.8 9 H17.6 Z" fill="#d24726"/><path d="M13 15.5 H21 M13 18 H21" stroke="#d24726" stroke-width="1.2"/><path d="M0 2.6 L14 0 V24 L0 21.4 Z" fill="#d24726"/><path d="M4.2 7 H7.6 C9.8 7 11 8.2 11 10.1 C11 12.1 9.6 13.4 7.5 13.4 H6.2 V17 H4.2 Z M6.2 8.8 V11.6 H7.3 C8.4 11.6 9 11.1 9 10.2 C9 9.3 8.4 8.8 7.3 8.8 Z" fill="#fff"/></svg>
  <!-- outlook -->
  <svg class="abs" style="left:651px;top:8px" width="24" height="24" viewBox="0 0 24 24"><rect x="11" y="6" width="12.6" height="12" fill="#fff"/><path d="M11 6 H23.6 V18 H11 Z" fill="none" stroke="#0a5fb4" stroke-width="1.2"/><path d="M12 7 L17.6 12.4 L23 7" stroke="#0a5fb4" stroke-width="1.6" fill="#eaf2fb"/><path d="M0 2.6 L14 0 V24 L0 21.4 Z" fill="#0a64bd"/><ellipse cx="7" cy="12" rx="3.1" ry="3.9" fill="none" stroke="#fff" stroke-width="1.8"/></svg>
  <!-- edge -->
  <svg class="abs" style="left:700px;top:8px" width="25" height="25" viewBox="0 0 25 25"><defs><linearGradient id="eg1" x1="0" y1=".2" x2="1" y2=".5"><stop offset="0" stop-color="#1b8fdc"/><stop offset=".45" stop-color="#2bb3e0"/><stop offset=".72" stop-color="#35c98a"/><stop offset="1" stop-color="#72d551"/></linearGradient><linearGradient id="eg2" x1="0" y1="0" x2="0" y2="1"><stop offset="0" stop-color="#1b9de2"/><stop offset="1" stop-color="#0c59a4"/></linearGradient></defs><circle cx="12.5" cy="12.5" r="12" fill="url(#eg2)"/><path d="M.6 11 C1.4 4.6 6.4 .5 12.5 .5 C19.4 .5 24.5 5.4 24.5 11 C24.5 14.6 21.8 16.6 19 16.6 C16.4 16.6 15.2 15.4 15.6 14.4 C16.4 13.4 16.8 12.4 16.6 11 C16.2 8.6 14 7 11.4 7 C6.6 7 2 10.6 .6 11 Z" fill="url(#eg1)"/><path d="M8.6 12.4 C7.6 16.6 10.4 21.6 16.4 21.6 C19 21.6 21.2 20.6 22.6 19 C20.4 22.6 16.6 24.5 12.5 24.5 C7 24.5 3.4 21 3.4 16.8 C3.4 14 5.4 12 8.6 12.4 Z" fill="#0b4f99" opacity=".55"/><path d="M9.4 11.8 C8.6 15.4 11 19.4 15.8 19.4 C17.4 19.4 18.8 19 20 18.2 C18.4 18.6 15 18 14.6 15 C14.4 13.6 15.2 13 15.4 12 C15.6 10.6 14.2 9.6 12.6 9.6 C11 9.6 9.8 10.4 9.4 11.8 Z" fill="#231c1c"/></svg>
  <!-- explorer -->
  <svg class="abs" style="left:750px;top:10.4px" width="22" height="20.2" viewBox="0 0 24 22"><path d="M0 1.5 Q0 .4 1.1 .4 H8.4 L10.6 2.6 H22.9 Q24 2.6 24 3.7 V6 H0 Z" fill="#e8a824"/><path d="M0 4.6 H24 V19 Q24 20 23 20 H1 Q0 20 0 19 Z" fill="#fcd462"/><path d="M0 4.6 H24 V7 H0 Z" fill="#fbe08c" opacity=".7"/><path d="M5 12 H19 V20 H16 V15 H8 V20 H5 Z" fill="#3a94e0"/><rect x="8" y="15" width="8" height="7" fill="#2c1f1f" opacity="0"/></svg>
  <div class="abs" style="left:741px;top:38px;width:31px;height:2px;background:#7cbcee"></div><div class="abs" style="left:774px;top:38px;width:7px;height:2px;background:#7cbcee"></div>
  <!-- chrome -->
  <div class="abs" style="left:786px;top:0;width:48px;height:40px;background:#4a4848"></div><div class="abs" style="left:830px;top:0;width:4px;height:40px;background:#3c3a3a;border-left:1px solid #5c5a5a"></div>
  <svg class="abs" style="left:798.3px;top:8.3px" width="23.4" height="23.4" viewBox="0 0 25 25"><circle cx="12.5" cy="12.5" r="11.6" fill="#fff"/><path d="M12.5 .5 A12 12 0 0 1 22.9 6.5 H12.5 A6 6 0 0 0 7.3 9.5 L2.1 6.5 A12 12 0 0 1 12.5 .5 Z" fill="#e43e2b"/><path d="M22.9 6.5 A12 12 0 0 1 12.5 24.5 L17.7 15.5 A6 6 0 0 0 17.7 9.5 L16.5 6.5 Z" fill="#fbc116"/><path d="M2.1 6.5 L7.3 15.5 A6 6 0 0 0 12.5 18.5 L17.7 15.5 L12.5 24.5 A12 12 0 0 1 2.1 6.5 Z" fill="#2ba24c"/><path d="M22.9 6.5 H12.5 L17.7 9.5 Z" fill="#fbc116"/><circle cx="12.5" cy="12.5" r="5.6" fill="#fff"/><circle cx="12.5" cy="12.5" r="4.5" fill="#4285f4"/></svg>
  <div class="abs" style="left:787px;top:38px;width:46px;height:2px;background:#7cbcee"></div>
  <!-- word -->
  <svg class="abs" style="left:847.5px;top:8.6px" width="22.6" height="22.6" viewBox="0 0 24 24"><rect x="10" y="3" width="13.4" height="18" rx="1" fill="#fff"/><rect x="10" y="3" width="13.4" height="18" rx="1" fill="none" stroke="#2b579a" stroke-width="1.4"/><path d="M15 6.5 H21.6 M15 9.2 H21.6 M15 11.9 H21.6 M15 14.6 H21.6 M15 17.3 H21.6" stroke="#2b579a" stroke-width="1.3"/><path d="M0 2.6 L14 0 V24 L0 21.4 Z" fill="#2b579a"/><path d="M2.6 8 L4.2 16 H5.8 L7 10.6 L8.2 16 H9.8 L11.4 8 H9.9 L8.9 13.6 L7.7 8 H6.3 L5.1 13.6 L4.1 8 Z" fill="#fff"/></svg>
  <div class="abs" style="left:839px;top:38px;width:40px;height:2px;background:#7cbcee"></div>

  <!-- tray -->
  <svg class="abs" style="left:1339px;top:12px" width="25" height="16" viewBox="0 0 25 16"><rect x=".7" y=".7" width="20.6" height="14.6" rx="1.4" stroke="#fff" stroke-width="1.3" fill="none"/><path d="M21.4 3.4 H23 Q24.2 3.4 24.2 4.6 V13.6 Q24.2 15.3 22.6 15.3 H20" stroke="#fff" stroke-width="1.2" fill="none"/><rect x="4" y="6.6" width="6.4" height="5.4" stroke="#fff" stroke-width="1.3" fill="none"/><path d="M3.4 3.8 H18.6 M13 7 H18.6 M13 9.4 H18.6 M13 11.8 H18.6" stroke="#fff" stroke-width="1.1"/></svg>
  <svg class="abs" style="left:1380px;top:15px" width="14" height="9" viewBox="0 0 14 9"><path d="M1 8 L7 1.6 L13 8" stroke="#fff" stroke-width="1.3" fill="none"/></svg>
  <svg class="abs" style="left:1402px;top:13px" width="18" height="15" viewBox="0 0 18 15"><rect x="3.6" y="1.7" width="13.4" height="8.8" stroke="#fff" stroke-width="1.2" fill="none"/><path d="M10.3 10.5 V13.6 M6.6 13.8 H14" stroke="#fff" stroke-width="1.2"/><rect x=".7" y=".7" width="4.6" height="3.4" fill="#2e2020" stroke="#fff" stroke-width="1"/><path d="M3 4.1 V13.8 H7" stroke="#fff" stroke-width="1" fill="none"/></svg>
  <svg class="abs" style="left:1426px;top:13px" width="19" height="14" viewBox="0 0 19 14"><path d="M1 4.8 H3.8 L7.4 1.4 V12.6 L3.8 9.2 H1 Z" stroke="#fff" stroke-width="1.1" fill="none" stroke-linejoin="round"/><path d="M9.8 4.8 Q11 7 9.8 9.2" stroke="#fff" stroke-width="1.1" fill="none"/><path d="M12 3.2 Q14.2 7 12 10.8" stroke="#fff" stroke-width="1.1" fill="none"/><path d="M14.4 1.6 Q17.6 7 14.4 12.4" stroke="#aaa" stroke-width="1" fill="none" opacity=".6"/></svg>
  <div class="tray" style="left:1455.5px;top:12.6px;font-size:11.8px;transform:scaleX(.78);transform-origin:0 0">ESP</div>
  <div class="tray" style="left:1501.3px;top:4px;font-size:12.2px;transform:scaleX(.92);transform-origin:0 0">11:30</div>
  <div class="tray" style="left:1488.6px;top:21.8px;font-size:12.2px;transform:scaleX(.955);transform-origin:0 0">21/1/2022</div>
  <svg class="abs" style="left:1559px;top:11px" width="17" height="17" viewBox="0 0 17 17"><path d="M.6 .8 H16 V12 H5.2 L2.6 15.4 V12 H.6 Z" fill="#fff"/><path d="M3 3.6 H13.6 M3 6 H13.6 M3 8.4 H13.6" stroke="#34211f" stroke-width="1"/></svg>
  <div class="abs" style="left:1566.5px;top:19px;width:16px;height:16px;border-radius:8px;background:#2a2020;border:1px solid #6a6060"></div>
  <div class="tray" style="left:1571.4px;top:20.5px;font-size:11.5px">6</div>
  <div class="abs" style="left:1594px;top:0;width:1px;height:40px;background:#7a7070"></div>
</div>

</body>
</html>
